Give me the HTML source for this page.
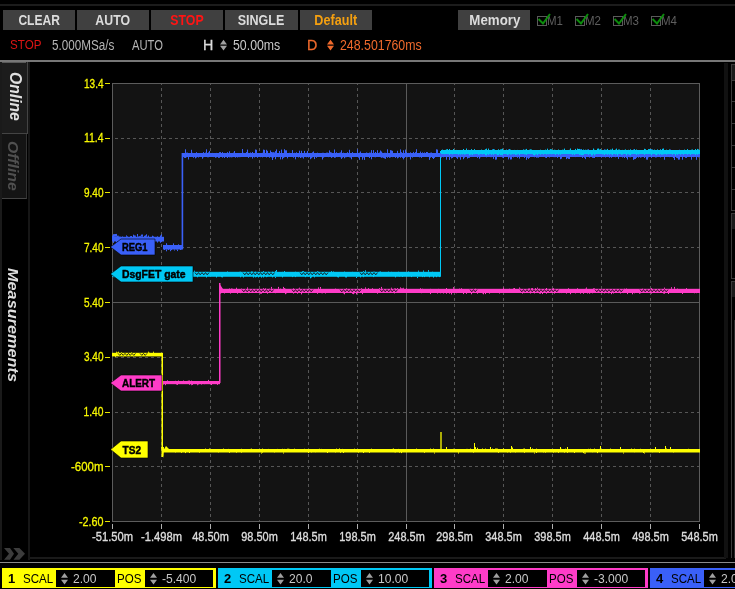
<!DOCTYPE html>
<html><head><meta charset="utf-8">
<style>
html,body{margin:0;padding:0;}
body{width:735px;height:589px;background:#000;position:relative;overflow:hidden;font-family:"Liberation Sans",sans-serif;}
.a{position:absolute;}
.btn{position:absolute;top:10px;height:20px;width:72px;background:#404040;color:#dcdcdc;font-weight:bold;font-size:14px;line-height:20px;text-align:center;}
.btn span{display:inline-block;transform:scaleX(.86);}
.t{position:absolute;white-space:nowrap;transform-origin:0 0;}
.cb{position:absolute;top:16px;width:8px;height:8px;border:1px solid #5a5a5a;}
.cbm{position:absolute;top:15px;color:#5e5e5e;font-size:12.5px;line-height:12px;transform:scaleX(.92);transform-origin:0 0;}
.plot{position:absolute;left:0;top:0;}
.yl{font-family:"Liberation Sans",sans-serif;font-size:13px;fill:#f8f800;stroke:#f8f800;stroke-width:0.3px;}
.xl{font-family:"Liberation Sans",sans-serif;font-size:12.5px;fill:#dcdcdc;stroke:#dcdcdc;stroke-width:0.35px;}
.lb{font-family:"Liberation Sans",sans-serif;font-size:11.5px;font-weight:bold;fill:#000;}
.ch{position:absolute;top:568px;height:20px;width:214px;}
.ch .num{position:absolute;left:6px;top:4px;font-size:13px;line-height:14px;color:#000;font-weight:bold;}
.ch .lab{position:absolute;top:4px;font-size:13px;line-height:14px;color:#000;transform:scaleX(.89);transform-origin:0 0;}
.ch .in{position:absolute;top:2px;height:17px;background:#000;}
.ch .val{position:absolute;top:4px;font-size:13px;line-height:14px;color:#c8c8c8;transform:scaleX(.93);transform-origin:0 0;}
</style></head><body><div id="wrap" style="position:absolute;left:0;top:0;width:735px;height:589px;will-change:transform">
<!-- top dark line -->
<div class="a" style="left:0;top:4px;width:735px;height:2px;background:#1c1c1c"></div>
<!-- toolbar buttons -->
<div class="btn" style="left:3px"><span>CLEAR</span></div>
<div class="btn" style="left:77px"><span style="transform:scaleX(.88)">AUTO</span></div>
<div class="btn" style="left:151px;color:#ff1414"><span style="transform:scaleX(.88)">STOP</span></div>
<div class="btn" style="left:225px;width:73px"><span style="transform:scaleX(.895)">SINGLE</span></div>
<div class="btn" style="left:300px;color:#f5a010"><span style="transform:scaleX(.9)">Default</span></div>
<div class="btn" style="left:460px;width:70px"><span style="transform:scaleX(.95)">Memory</span></div><div class="a" style="left:458px;top:10px;width:2px;height:20px;background:#404040"></div>
<!-- checkboxes -->
<div class="cb" style="left:537px"></div><div class="cbm" style="left:547px">M1</div>
<div class="cb" style="left:575px"></div><div class="cbm" style="left:585px">M2</div>
<div class="cb" style="left:613px"></div><div class="cbm" style="left:623px">M3</div>
<div class="cb" style="left:651px"></div><div class="cbm" style="left:661px">M4</div>
<svg class="a" style="left:0;top:0" width="735" height="40">
<path d="M538.5 19 L543 23.5 L550 14" stroke="#0c8c0c" stroke-width="2" fill="none"/>
<path d="M576.5 19 L581 23.5 L588 14" stroke="#0c8c0c" stroke-width="2" fill="none"/>
<path d="M614.5 19 L619 23.5 L626 14" stroke="#0c8c0c" stroke-width="2" fill="none"/>
<path d="M652.5 19 L657 23.5 L664 14" stroke="#0c8c0c" stroke-width="2" fill="none"/>
</svg>
<!-- row 2 -->
<div class="t" style="left:10px;top:36.5px;font-size:13.5px;color:#dc1414;transform:scaleX(.86)">STOP</div>
<div class="t" style="left:52px;top:37px;font-size:14px;color:#b4b4b4;transform:scaleX(.835)">5.000MSa/s</div>
<div class="t" style="left:132px;top:37px;font-size:14px;color:#b4b4b4;transform:scaleX(.80)">AUTO</div>
<div class="t" style="left:203px;top:35.5px;font-size:15px;color:#dcdcdc;-webkit-text-stroke:0.3px #dcdcdc;transform:scaleX(.95)">H</div>
<svg class="a" style="left:220px;top:39px" width="8" height="13"><path d="M3.5 0.8 L7 5.6 L0 5.6 Z M0 6.8 L7 6.8 L3.5 11.6 Z" fill="#a0a0a0"/></svg>
<div class="t" style="left:233px;top:37px;font-size:14px;color:#c8c8c8;transform:scaleX(.88)">50.00ms</div>
<div class="t" style="left:307px;top:35.5px;font-size:15px;color:#f06a2c;-webkit-text-stroke:0.3px #f06a2c;transform:scaleX(.95)">D</div>
<svg class="a" style="left:327px;top:39px" width="8" height="13"><path d="M3.5 0.8 L7 5.6 L0 5.6 Z M0 6.8 L7 6.8 L3.5 11.6 Z" fill="#f06a2c"/></svg>
<div class="t" style="left:340px;top:37px;font-size:14px;color:#f06a2c;transform:scaleX(.882)">248.501760ms</div>
<!-- separator -->
<div class="a" style="left:0;top:60px;width:735px;height:2px;background:#777"></div>
<!-- left sidebar -->
<div class="a" style="left:0px;top:62px;width:2px;height:498px;background:#1a1a1a"></div>
<div class="a" style="left:28px;top:62px;width:2px;height:498px;background:#161616"></div>
<div class="a" style="left:2px;top:62px;width:25px;height:71px;background:#1c1c1c;border-right:1px solid #444;border-bottom:1px solid #444"></div>
<div class="a" style="left:2px;top:62px;width:24px;height:1px;background:#5a5a5a"></div>
<div class="a" style="left:2px;top:134px;width:24px;height:64px;background:#141414;border-right:1px solid #333;border-bottom:1px solid #444"></div>
<div class="t" style="left:24px;top:72px;font-size:16px;font-weight:bold;font-style:italic;color:#e0e0e0;transform:rotate(90deg) scaleX(.98)">Online</div>
<div class="t" style="left:20.5px;top:141px;font-size:14.5px;font-weight:bold;font-style:italic;color:#505050;transform:rotate(90deg) scaleX(1.09)">Offline</div>
<div class="t" style="left:22px;top:268px;font-size:15.5px;font-weight:bold;font-style:italic;color:#dedede;transform:rotate(90deg) scaleX(1.05)">Measurements</div>
<svg class="a" style="left:0;top:540px" width="30" height="22"><path d="M4 8 L10 8 L14 13.8 L10 19.8 L4 19.8 L9 13.8 Z M13.3 8 L19.4 8 L25 13.8 L19.4 19.8 L13.5 19.8 L18.3 13.8 Z" fill="#3c3c3c"/></svg>
<!-- bottom dark line -->
<div class="a" style="left:30px;top:557px;width:696px;height:2px;background:#1a1a1a"></div>
<!-- right strip -->
<div class="a" style="left:724px;top:63px;width:4px;height:495px;background:#111"></div>
<div class="a" style="left:731px;top:64px;width:4px;height:16px;background:#1a1a1a;border-left:1px solid #3a3a3a;border-top:1px solid #3a3a3a"></div>
<div class="a" style="left:731px;top:80px;width:1px;height:130px;background:#3a3a3a"></div>
<div class="a" style="left:731px;top:80px;width:4px;height:1px;background:#3a3a3a"></div>
<div class="a" style="left:731px;top:101px;width:4px;height:1px;background:#3a3a3a"></div>
<div class="a" style="left:731px;top:123px;width:4px;height:1px;background:#3a3a3a"></div>
<div class="a" style="left:731px;top:145px;width:4px;height:1px;background:#3a3a3a"></div>
<div class="a" style="left:731px;top:167px;width:4px;height:1px;background:#3a3a3a"></div>
<div class="a" style="left:731px;top:189px;width:4px;height:1px;background:#3a3a3a"></div>
<div class="a" style="left:731px;top:210px;width:4px;height:1px;background:#3a3a3a"></div>
<div class="a" style="left:731px;top:213px;width:4px;height:15px;background:#1a1a1a;border-left:1px solid #3a3a3a;border-top:1px solid #3a3a3a"></div>
<div class="a" style="left:731px;top:228px;width:1px;height:50px;background:#3a3a3a"></div>
<div class="a" style="left:731px;top:278px;width:4px;height:1px;background:#3a3a3a"></div>
<div class="a" style="left:731px;top:281px;width:4px;height:15px;background:#1a1a1a;border-left:1px solid #3a3a3a;border-top:1px solid #3a3a3a"></div>
<div class="a" style="left:731px;top:296px;width:1px;height:262px;background:#3a3a3a"></div>
<div class="a" style="left:734px;top:320px;width:1px;height:238px;background:#2a2a2a"></div>
<svg class="plot" width="735" height="589" viewBox="0 0 735 589">
<rect x="112" y="83" width="588" height="438" fill="#131313"/>
<line x1="161.5" y1="83" x2="161.5" y2="521" stroke="#565656" stroke-width="1" stroke-dasharray="3 3" stroke-dashoffset="-5"/>
<line x1="210.5" y1="83" x2="210.5" y2="521" stroke="#565656" stroke-width="1" stroke-dasharray="3 3" stroke-dashoffset="-5"/>
<line x1="259.5" y1="83" x2="259.5" y2="521" stroke="#565656" stroke-width="1" stroke-dasharray="3 3" stroke-dashoffset="-5"/>
<line x1="308.5" y1="83" x2="308.5" y2="521" stroke="#565656" stroke-width="1" stroke-dasharray="3 3" stroke-dashoffset="-5"/>
<line x1="357.5" y1="83" x2="357.5" y2="521" stroke="#565656" stroke-width="1" stroke-dasharray="3 3" stroke-dashoffset="-5"/>
<line x1="406.5" y1="83" x2="406.5" y2="521" stroke="#5a5a5a" stroke-width="1"/>
<line x1="454.5" y1="83" x2="454.5" y2="521" stroke="#565656" stroke-width="1" stroke-dasharray="3 3" stroke-dashoffset="-5"/>
<line x1="503.5" y1="83" x2="503.5" y2="521" stroke="#565656" stroke-width="1" stroke-dasharray="3 3" stroke-dashoffset="-5"/>
<line x1="552.5" y1="83" x2="552.5" y2="521" stroke="#565656" stroke-width="1" stroke-dasharray="3 3" stroke-dashoffset="-5"/>
<line x1="601.5" y1="83" x2="601.5" y2="521" stroke="#565656" stroke-width="1" stroke-dasharray="3 3" stroke-dashoffset="-5"/>
<line x1="650.5" y1="83" x2="650.5" y2="521" stroke="#565656" stroke-width="1" stroke-dasharray="3 3" stroke-dashoffset="-5"/>
<line x1="112" y1="138.5" x2="700" y2="138.5" stroke="#565656" stroke-width="1" stroke-dasharray="3 3" stroke-dashoffset="-3"/>
<line x1="112" y1="192.5" x2="700" y2="192.5" stroke="#565656" stroke-width="1" stroke-dasharray="3 3" stroke-dashoffset="-3"/>
<line x1="112" y1="247.5" x2="700" y2="247.5" stroke="#565656" stroke-width="1" stroke-dasharray="3 3" stroke-dashoffset="-3"/>
<line x1="112" y1="302.5" x2="700" y2="302.5" stroke="#5a5a5a" stroke-width="1"/>
<line x1="112" y1="357.5" x2="700" y2="357.5" stroke="#565656" stroke-width="1" stroke-dasharray="3 3" stroke-dashoffset="-3"/>
<line x1="112" y1="412.5" x2="700" y2="412.5" stroke="#565656" stroke-width="1" stroke-dasharray="3 3" stroke-dashoffset="-3"/>
<line x1="112" y1="466.5" x2="700" y2="466.5" stroke="#565656" stroke-width="1" stroke-dasharray="3 3" stroke-dashoffset="-3"/>
<rect x="112.5" y="83.5" width="587" height="438" fill="none" stroke="#5c5c5c" stroke-width="1"/>
<path d="M112.5 271.8V276.8M113.5 271.8V277.2M114.5 271.8V277.2M115.5 271.5V276.9M116.5 271.8V276.8M117.5 271.6V276.8M118.5 271.8V276.8M119.5 271.8V276.8M120.5 271.1V276.8M121.5 271.7V276.8M122.5 271.8V276.8M123.5 271.8V276.8M124.5 271.8V276.8M125.5 271.8V276.8M126.5 271.8V276.8M127.5 271.8V276.8M128.5 271.8V276.8M129.5 271.8V276.8M130.5 271.8V276.8M131.5 271.8V276.8M132.5 271.8V276.8M133.5 271.8V277.1M134.5 271.8V276.8M135.5 271.8V277.3M136.5 271.8V276.8M137.5 271.8V276.8M138.5 271.8V276.8M139.5 271.8V276.8M140.5 271.8V276.8M141.5 271.8V276.8M142.5 271.2V276.8M143.5 271.8V276.8M144.5 271.8V276.8M145.5 271.8V277.2M146.5 271.8V276.8M147.5 271.8V277.0M148.5 271.8V276.8M149.5 271.4V276.8M150.5 271.8V276.8M151.5 271.8V276.8M152.5 271.8V276.8M153.5 271.8V276.8M154.5 271.8V276.8M155.5 271.8V276.8M156.5 271.8V276.8M157.5 271.8V277.1M158.5 271.8V276.8M159.5 271.8V276.8M160.5 271.8V276.8M161.5 271.8V277.5M162.5 271.8V276.8M163.5 271.8V276.8M164.5 271.8V277.3M165.5 271.7V276.8M166.5 271.8V276.8M167.5 271.8V276.8M168.5 271.5V277.5M169.5 271.8V277.0M170.5 271.8V276.8M171.5 271.1V276.8M172.5 271.8V276.8M173.5 271.7V276.8M174.5 271.8V276.8M175.5 271.8V277.6M176.5 271.8V277.2M177.5 271.4V276.8M178.5 271.8V276.8M179.5 271.8V276.8M180.5 271.8V276.8M181.5 271.8V276.8M182.5 271.8V276.8M183.5 271.8V276.8M184.5 271.8V276.8M185.5 271.8V276.8M186.5 271.8V276.8M187.5 271.8V276.8M188.5 271.8V276.8M189.5 271.8V276.8M190.5 271.8V276.8M191.5 271.8V276.8M192.5 271.8V276.8M193.5 271.8V276.8M194.5 271.8V276.8M195.5 271.8V276.8M196.5 271.8V276.8M197.5 271.8V277.3M198.5 271.8V276.8M199.5 271.8V276.8M200.5 271.8V276.8M201.5 271.8V276.8M202.5 271.8V276.8M203.5 271.8V276.8M204.5 271.8V276.8M205.5 271.7V276.8M206.5 271.8V277.5M207.5 271.8V276.8M208.5 271.8V276.8M209.5 271.8V276.8M210.5 271.8V276.8M211.5 271.8V276.8M212.5 271.8V276.8M213.5 271.8V276.8M214.5 271.8V276.8M215.5 271.8V276.8M216.5 271.8V277.5M217.5 271.8V276.8M218.5 271.8V276.8M219.5 271.8V276.8M220.5 271.8V276.8M221.5 271.8V277.2M222.5 271.8V277.4M223.5 271.8V276.8M224.5 271.8V276.8M225.5 271.8V276.8M226.5 271.8V276.8M227.5 271.4V276.8M228.5 271.8V276.8M229.5 271.8V276.8M230.5 271.8V276.8M231.5 271.8V276.8M232.5 271.8V276.8M233.5 271.8V276.8M234.5 271.8V276.8M235.5 271.8V276.8M236.5 271.8V276.8M237.5 271.8V276.8M238.5 271.8V276.8M239.5 271.7V276.8M240.5 271.6V277.3M241.5 271.8V276.8M242.5 271.8V276.8M243.5 271.8V277.5M244.5 271.8V276.8M245.5 271.8V276.8M246.5 271.8V276.8M247.5 271.8V276.8M248.5 271.8V276.8M249.5 271.8V276.8M250.5 271.8V276.8M251.5 271.4V276.8M252.5 271.5V276.8M253.5 271.8V277.6M254.5 271.8V276.8M255.5 271.6V277.4M256.5 271.8V277.1M257.5 271.8V276.8M258.5 271.8V277.5M259.5 271.8V276.8M260.5 271.8V276.8M261.5 271.8V277.6M262.5 271.8V276.8M263.5 271.1V277.5M264.5 271.8V276.8M265.5 271.8V276.8M266.5 271.8V277.2M267.5 271.8V276.9M268.5 271.6V276.8M269.5 271.8V276.8M270.5 271.8V276.8M271.5 271.8V276.8M272.5 271.6V277.4M273.5 271.8V276.8M274.5 271.8V276.8M275.5 271.1V276.8M276.5 271.8V276.8M277.5 271.8V276.8M278.5 271.8V276.8M279.5 271.8V276.8M280.5 271.8V276.8M281.5 271.8V276.8M282.5 271.7V277.4M283.5 271.8V276.8M284.5 271.1V276.8M285.5 271.8V276.8M286.5 271.8V276.8M287.5 271.8V276.8M288.5 271.8V276.8M289.5 271.8V276.8M290.5 271.8V276.8M291.5 271.8V276.8M292.5 271.8V277.1M293.5 271.8V276.8M294.5 271.8V276.8M295.5 271.6V277.1M296.5 271.8V276.8M297.5 271.8V276.8M298.5 271.8V276.8M299.5 271.8V276.8M300.5 271.8V276.8M301.5 271.8V276.8M302.5 271.2V276.8M303.5 271.1V276.8M304.5 271.8V276.8M305.5 271.8V277.2M306.5 271.8V276.8M307.5 271.8V276.8M308.5 271.8V276.8M309.5 271.8V276.8M310.5 271.8V276.9M311.5 271.8V277.5M312.5 271.8V276.8M313.5 271.8V276.8M314.5 271.8V277.4M315.5 271.8V276.8M316.5 271.8V276.8M317.5 271.2V276.8M318.5 271.6V276.8M319.5 271.8V276.8M320.5 271.8V276.8M321.5 271.8V276.8M322.5 271.8V276.8M323.5 271.8V276.8M324.5 271.7V276.8M325.5 271.8V276.8M326.5 271.8V276.8M327.5 271.8V276.8M328.5 271.8V276.8M329.5 271.8V276.8M330.5 271.8V276.8M331.5 271.1V276.8M332.5 271.8V276.8M333.5 271.4V276.8M334.5 271.8V276.8M335.5 271.8V276.8M336.5 271.8V276.8M337.5 271.8V277.2M338.5 271.8V277.5M339.5 271.8V276.8M340.5 271.8V276.8M341.5 271.8V276.8M342.5 271.8V276.8M343.5 271.8V276.8M344.5 271.5V276.8M345.5 271.8V277.4M346.5 271.8V277.5M347.5 271.8V276.8M348.5 271.8V276.8M349.5 271.8V276.8M350.5 271.8V276.8M351.5 271.8V276.8M352.5 271.7V276.8M353.5 271.8V276.8M354.5 271.8V276.8M355.5 271.8V276.8M356.5 271.8V276.8M357.5 271.8V276.8M358.5 271.8V276.8M359.5 271.8V276.8M360.5 271.8V277.4M361.5 271.8V276.8M362.5 271.8V276.8M363.5 271.1V277.2M364.5 271.8V276.8M365.5 271.8V276.8M366.5 271.8V276.8M367.5 271.8V276.8M368.5 271.8V276.8M369.5 271.8V276.8M370.5 271.8V276.8M371.5 271.8V276.8M372.5 271.8V276.8M373.5 271.6V277.1M374.5 271.6V276.8M375.5 271.8V276.8M376.5 271.8V276.8M377.5 271.8V276.8M378.5 271.8V276.8M379.5 271.6V276.8M380.5 271.4V276.8M381.5 271.8V276.8M382.5 271.8V276.8M383.5 271.8V276.8M384.5 271.8V276.8M385.5 271.8V276.8M386.5 271.8V276.8M387.5 271.8V276.8M388.5 271.5V276.8M389.5 271.8V276.8M390.5 271.8V276.8M391.5 271.7V276.8M392.5 271.8V276.8M393.5 271.8V276.8M394.5 271.8V276.8M395.5 271.8V277.4M396.5 271.8V276.8M397.5 271.8V276.8M398.5 271.6V276.8M399.5 271.8V276.9M400.5 271.8V276.8M401.5 271.8V276.8M402.5 271.8V277.0M403.5 271.8V276.8M404.5 271.8V276.8M405.5 271.8V276.8M406.5 271.8V276.8M407.5 271.8V276.8M408.5 271.4V276.8M409.5 271.8V276.8M410.5 271.8V276.8M411.5 271.8V277.1M412.5 271.8V276.8M413.5 271.8V276.8M414.5 271.8V276.8M415.5 271.8V276.8M416.5 271.8V276.8M417.5 271.8V276.8M418.5 271.8V276.8M419.5 271.8V276.8M420.5 271.8V276.8M421.5 271.8V276.8M422.5 271.8V277.1M423.5 271.8V276.8M424.5 271.8V277.1M425.5 271.8V276.8M426.5 271.8V276.8M427.5 271.8V276.8M428.5 271.8V276.8M429.5 271.8V277.3M430.5 271.8V276.8M431.5 271.8V276.8M432.5 271.6V276.8M433.5 271.8V277.6M434.5 271.8V276.8M435.5 271.8V276.8M436.5 271.8V277.2M437.5 271.8V276.8M438.5 271.8V276.8M439.5 271.8V277.1M440.5 271.8V276.8" stroke="#00c8f5" stroke-width="1" fill="none"/>
<path d="M133.5 271.8v-1.5M144.5 271.8v-1.7M423.5 271.8v-1.3M428.5 271.8v-1.7M275.5 276.8v1.1M417.5 276.8v1.3M146.5 271.8v-1.2M356.5 276.8v1.2M310.5 276.8v1.5M365.5 271.8v-1.5M117.5 276.8v1.4M190.5 276.8v1.2M276.5 271.8v-1.8M418.5 271.8v-1.2M194.5 271.8v-1.1" stroke="#00c8f5" stroke-width="1" fill="none"/>
<path d="M195.0 272.6L196.8 274.8L198.5 272.6M198.5 272.6L200.2 274.8L202.0 272.6M202.0 272.6L203.8 274.8L205.5 272.6M205.5 272.6L207.2 274.8L209.0 272.6" stroke="#131313" stroke-width="0.9" fill="none"/>
<path d="M243.0 272.6L244.8 274.8L246.5 272.6M246.5 272.6L248.2 274.8L250.0 272.6M250.0 272.6L251.8 274.8L253.5 272.6M253.5 272.6L255.2 274.8L257.0 272.6M257.0 272.6L258.8 274.8L260.5 272.6M260.5 272.6L262.2 274.8L264.0 272.6M264.0 272.6L265.8 274.8L267.5 272.6M267.5 272.6L269.2 274.8L271.0 272.6M271.0 272.6L272.8 274.8L274.5 272.6" stroke="#131313" stroke-width="0.9" fill="none"/>
<path d="M300.0 272.6L301.8 274.8L303.5 272.6M303.5 272.6L305.2 274.8L307.0 272.6M307.0 272.6L308.8 274.8L310.5 272.6M310.5 272.6L312.2 274.8L314.0 272.6M314.0 272.6L315.8 274.8L317.5 272.6M317.5 272.6L319.2 274.8L321.0 272.6M321.0 272.6L322.8 274.8L324.5 272.6M324.5 272.6L326.2 274.8L328.0 272.6" stroke="#131313" stroke-width="0.9" fill="none"/>
<path d="M360.0 272.6L361.8 274.8L363.5 272.6M363.5 272.6L365.2 274.8L367.0 272.6M367.0 272.6L368.8 274.8L370.5 272.6M370.5 272.6L372.2 274.8L374.0 272.6M374.0 272.6L375.8 274.8L377.5 272.6" stroke="#131313" stroke-width="0.9" fill="none"/>
<rect x="440" y="151" width="1" height="122" fill="#00c8f5"/>
<path d="M112.5 380.6V384.2M113.5 381.0V384.2M114.5 381.0V384.2M115.5 380.9V384.2M116.5 381.0V384.2M117.5 381.0V384.2M118.5 381.0V384.2M119.5 381.0V384.2M120.5 381.0V384.9M121.5 381.0V384.2M122.5 381.0V384.2M123.5 381.0V384.2M124.5 381.0V384.2M125.5 381.0V384.2M126.5 381.0V384.2M127.5 381.0V384.2M128.5 381.0V384.2M129.5 381.0V384.2M130.5 380.6V384.2M131.5 381.0V384.2M132.5 380.8V384.4M133.5 381.0V384.2M134.5 381.0V384.2M135.5 381.0V384.2M136.5 381.0V384.2M137.5 381.0V384.7M138.5 381.0V384.2M139.5 381.0V384.4M140.5 381.0V384.2M141.5 381.0V384.2M142.5 380.7V384.2M143.5 381.0V384.2M144.5 381.0V384.2M145.5 381.0V384.3M146.5 381.0V384.2M147.5 381.0V384.3M148.5 381.0V384.2M149.5 381.0V384.2M150.5 381.0V384.2M151.5 381.0V384.2M152.5 381.0V384.2M153.5 381.0V384.2M154.5 381.0V384.2M155.5 381.0V384.9M156.5 381.0V384.2M157.5 381.0V384.2M158.5 381.0V384.2M159.5 380.6V384.2M160.5 381.0V384.7M161.5 381.0V384.2M162.5 380.8V384.2M163.5 381.0V384.6M164.5 381.0V384.2M165.5 381.0V385.0M166.5 381.0V384.2M167.5 380.3V384.2M168.5 381.0V384.2M169.5 381.0V384.2M170.5 381.0V384.2M171.5 381.0V384.2M172.5 381.0V384.2M173.5 381.0V384.2M174.5 381.0V384.2M175.5 380.8V384.2M176.5 381.0V384.6M177.5 381.0V384.9M178.5 380.5V384.2M179.5 381.0V384.2M180.5 381.0V384.2M181.5 381.0V384.2M182.5 381.0V384.2M183.5 380.5V384.2M184.5 381.0V384.2M185.5 381.0V384.2M186.5 381.0V384.2M187.5 380.9V384.2M188.5 380.6V384.2M189.5 380.5V384.8M190.5 381.0V384.2M191.5 380.6V384.2M192.5 381.0V384.9M193.5 381.0V384.2M194.5 381.0V384.2M195.5 381.0V384.2M196.5 381.0V384.2M197.5 381.0V384.2M198.5 381.0V384.5M199.5 381.0V384.2M200.5 381.0V384.2M201.5 381.0V384.6M202.5 381.0V384.2M203.5 381.0V384.2M204.5 381.0V384.3M205.5 381.0V384.2M206.5 381.0V384.2M207.5 381.0V384.2M208.5 380.6V384.2M209.5 381.0V384.2M210.5 381.0V384.2M211.5 381.0V385.0M212.5 381.0V384.2M213.5 381.0V384.2M214.5 381.0V384.2M215.5 381.0V384.2M216.5 381.0V384.2M217.5 381.0V384.9M218.5 381.0V384.2M219.5 381.0V384.2" stroke="#ff3cc8" stroke-width="1" fill="none"/>
<path d="M197.5 384.2v1.0M208.5 381v-1.1M191.5 384.2v1.0M159.5 384.2v1.0M142.5 384.2v1.0M119.5 381v-1.4M126.5 384.2v1.0M165.5 384.2v1.0" stroke="#ff3cc8" stroke-width="1" fill="none"/>
<rect x="219" y="283" width="1.5" height="100" fill="#ff3cc8"/>
<path d="M219 283 L223 289 L220 289 Z" fill="#ff3cc8"/>
<path d="M219.5 288.8V293.0M220.5 288.8V293.7M221.5 288.8V293.1M222.5 288.8V293.0M223.5 288.8V293.0M224.5 288.8V293.5M225.5 288.8V293.0M226.5 288.8V293.0M227.5 288.8V293.0M228.5 288.8V293.0M229.5 288.4V293.0M230.5 288.8V293.6M231.5 288.4V293.0M232.5 288.6V293.0M233.5 288.8V293.0M234.5 288.8V293.0M235.5 288.8V293.0M236.5 288.1V293.0M237.5 288.8V293.7M238.5 288.8V293.0M239.5 288.8V293.0M240.5 288.8V293.2M241.5 288.5V293.0M242.5 288.8V293.0M243.5 288.8V293.0M244.5 288.8V293.0M245.5 288.8V293.0M246.5 288.8V293.0M247.5 288.8V293.0M248.5 288.8V293.2M249.5 288.8V293.0M250.5 288.8V293.0M251.5 288.8V293.0M252.5 288.8V293.0M253.5 288.8V293.0M254.5 288.8V293.0M255.5 288.8V293.0M256.5 288.8V293.0M257.5 288.8V293.0M258.5 288.8V293.0M259.5 288.8V293.0M260.5 288.8V293.7M261.5 288.8V293.7M262.5 288.8V293.0M263.5 288.2V293.0M264.5 288.8V293.0M265.5 288.3V293.0M266.5 288.8V293.0M267.5 288.8V293.7M268.5 288.8V293.0M269.5 288.6V293.0M270.5 288.8V293.0M271.5 288.8V293.0M272.5 288.8V293.0M273.5 288.7V293.0M274.5 288.8V293.0M275.5 288.8V293.2M276.5 288.8V293.0M277.5 288.8V293.0M278.5 288.8V293.0M279.5 288.8V293.0M280.5 288.5V293.0M281.5 288.8V293.0M282.5 288.8V293.0M283.5 288.8V293.0M284.5 288.1V293.0M285.5 288.6V293.0M286.5 288.8V293.4M287.5 288.8V293.0M288.5 288.8V293.0M289.5 288.8V293.0M290.5 288.8V293.0M291.5 288.8V293.0M292.5 288.8V293.0M293.5 288.3V293.6M294.5 288.8V293.0M295.5 288.8V293.0M296.5 288.8V293.0M297.5 288.8V293.7M298.5 288.6V293.0M299.5 288.8V293.0M300.5 288.8V293.0M301.5 288.8V293.0M302.5 288.8V293.0M303.5 288.8V293.0M304.5 288.8V293.0M305.5 288.8V293.0M306.5 288.8V293.0M307.5 288.8V293.0M308.5 288.8V293.0M309.5 288.4V293.0M310.5 288.8V293.0M311.5 288.8V293.0M312.5 288.8V293.0M313.5 288.8V293.0M314.5 288.8V293.0M315.5 288.8V293.0M316.5 288.8V293.0M317.5 288.8V293.8M318.5 288.5V293.0M319.5 288.8V293.0M320.5 288.8V293.0M321.5 288.8V293.2M322.5 288.8V293.3M323.5 288.8V293.0M324.5 288.8V293.0M325.5 288.8V293.5M326.5 288.8V293.0M327.5 288.8V293.0M328.5 288.8V293.0M329.5 288.8V293.0M330.5 288.8V293.0M331.5 288.8V293.0M332.5 288.8V293.0M333.5 288.8V293.0M334.5 288.8V293.0M335.5 288.5V293.0M336.5 288.8V293.0M337.5 288.8V293.0M338.5 288.8V293.0M339.5 288.8V293.0M340.5 288.8V293.0M341.5 288.8V293.0M342.5 288.8V293.0M343.5 288.8V293.4M344.5 288.8V293.0M345.5 288.8V293.0M346.5 288.3V293.0M347.5 288.8V293.0M348.5 288.8V293.0M349.5 288.8V293.0M350.5 288.8V293.0M351.5 288.8V293.0M352.5 288.8V293.8M353.5 288.8V293.2M354.5 288.8V293.3M355.5 288.8V293.0M356.5 288.8V293.0M357.5 288.8V293.0M358.5 288.8V293.0M359.5 288.8V293.0M360.5 288.8V293.0M361.5 288.2V293.0M362.5 288.8V293.0M363.5 288.8V293.0M364.5 288.8V293.0M365.5 288.8V293.0M366.5 288.8V293.0M367.5 288.8V293.0M368.5 288.1V293.0M369.5 288.8V293.0M370.5 288.8V293.0M371.5 288.8V293.0M372.5 288.2V293.0M373.5 288.8V293.0M374.5 288.8V293.0M375.5 288.8V293.0M376.5 288.8V293.0M377.5 288.8V293.7M378.5 288.8V293.0M379.5 288.1V293.0M380.5 288.8V293.0M381.5 288.8V293.0M382.5 288.7V293.0M383.5 288.8V293.0M384.5 288.8V293.0M385.5 288.8V293.0M386.5 288.8V293.0M387.5 288.8V293.0M388.5 288.8V293.0M389.5 288.8V293.0M390.5 288.8V293.0M391.5 288.8V293.0M392.5 288.8V293.0M393.5 288.8V293.0M394.5 288.4V293.4M395.5 288.4V293.0M396.5 288.8V293.0M397.5 288.1V293.0M398.5 288.8V293.0M399.5 288.8V293.0M400.5 288.8V293.0M401.5 288.3V293.0M402.5 288.3V293.0M403.5 288.8V293.0M404.5 288.8V293.0M405.5 288.8V293.0M406.5 288.2V293.0M407.5 288.8V293.0M408.5 288.8V293.0M409.5 288.8V293.0M410.5 288.8V293.0M411.5 288.8V293.0M412.5 288.8V293.0M413.5 288.8V293.0M414.5 288.8V293.0M415.5 288.8V293.0M416.5 288.8V293.0M417.5 288.8V293.0M418.5 288.8V293.0M419.5 288.8V293.0M420.5 288.2V293.0M421.5 288.8V293.2M422.5 288.6V293.0M423.5 288.8V293.0M424.5 288.8V293.0M425.5 288.8V293.0M426.5 288.8V293.0M427.5 288.8V293.0M428.5 288.8V293.0M429.5 288.8V293.0M430.5 288.7V293.6M431.5 288.8V293.0M432.5 288.8V293.0M433.5 288.8V293.0M434.5 288.8V293.0M435.5 288.8V293.0M436.5 288.8V293.0M437.5 288.8V293.5M438.5 288.7V293.0M439.5 288.8V293.0M440.5 288.8V293.3M441.5 288.8V293.0M442.5 288.8V293.0M443.5 288.8V293.5M444.5 288.8V293.0M445.5 288.8V293.0M446.5 288.0V293.7M447.5 288.8V293.0M448.5 288.8V293.0M449.5 288.8V293.6M450.5 288.8V293.0M451.5 288.8V293.5M452.5 288.8V293.0M453.5 288.8V293.0M454.5 288.8V293.0M455.5 288.8V293.0M456.5 288.8V293.2M457.5 288.8V293.0M458.5 288.8V293.0M459.5 288.5V293.0M460.5 288.8V293.0M461.5 288.2V293.0M462.5 288.8V293.0M463.5 288.8V293.0M464.5 288.8V293.0M465.5 288.8V293.0M466.5 288.8V293.8M467.5 288.8V293.0M468.5 288.8V293.0M469.5 288.8V293.0M470.5 288.8V293.0M471.5 288.8V293.0M472.5 288.8V293.0M473.5 288.8V293.0M474.5 288.8V293.0M475.5 288.6V293.0M476.5 288.8V293.0M477.5 288.8V293.7M478.5 288.8V293.0M479.5 288.8V293.0M480.5 288.8V293.0M481.5 288.8V293.0M482.5 288.8V293.4M483.5 288.8V293.0M484.5 288.8V293.0M485.5 288.8V293.0M486.5 288.8V293.0M487.5 288.8V293.0M488.5 288.8V293.0M489.5 288.8V293.6M490.5 288.8V293.0M491.5 288.8V293.0M492.5 288.8V293.0M493.5 288.8V293.0M494.5 288.8V293.0M495.5 288.8V293.0M496.5 288.8V293.0M497.5 288.8V293.0M498.5 288.8V293.0M499.5 288.8V293.5M500.5 288.8V293.0M501.5 288.8V293.0M502.5 288.8V293.0M503.5 288.8V293.0M504.5 288.8V293.0M505.5 288.8V293.0M506.5 288.8V293.0M507.5 288.8V293.0M508.5 288.8V293.0M509.5 288.6V293.0M510.5 288.8V293.0M511.5 288.8V293.0M512.5 288.8V293.0M513.5 288.3V293.0M514.5 288.0V293.0M515.5 288.8V293.0M516.5 288.8V293.0M517.5 288.8V293.0M518.5 288.8V293.0M519.5 288.8V293.0M520.5 288.6V293.0M521.5 288.8V293.0M522.5 288.8V293.6M523.5 288.8V293.0M524.5 288.8V293.1M525.5 288.8V293.0M526.5 288.8V293.0M527.5 288.8V293.0M528.5 288.5V293.0M529.5 288.4V293.0M530.5 288.8V293.5M531.5 288.2V293.0M532.5 288.1V293.0M533.5 288.8V293.0M534.5 288.8V293.4M535.5 288.1V293.0M536.5 288.8V293.0M537.5 288.8V293.0M538.5 288.8V293.0M539.5 288.6V293.6M540.5 288.8V293.7M541.5 288.8V293.0M542.5 288.8V293.0M543.5 288.8V293.0M544.5 288.8V293.0M545.5 288.8V293.0M546.5 288.0V293.7M547.5 288.8V293.0M548.5 288.8V293.0M549.5 288.8V293.0M550.5 288.8V293.0M551.5 288.8V293.0M552.5 288.6V293.0M553.5 288.2V293.0M554.5 288.8V293.6M555.5 288.8V293.0M556.5 288.8V293.0M557.5 288.8V293.0M558.5 288.8V293.0M559.5 288.8V293.1M560.5 288.8V293.0M561.5 288.8V293.1M562.5 288.8V293.0M563.5 288.8V293.0M564.5 288.8V293.0M565.5 288.8V293.0M566.5 288.8V293.6M567.5 288.8V293.0M568.5 288.2V293.0M569.5 288.8V293.0M570.5 288.8V293.7M571.5 288.8V293.0M572.5 288.8V293.0M573.5 288.8V293.0M574.5 288.8V293.0M575.5 288.8V293.4M576.5 288.8V293.0M577.5 288.2V293.0M578.5 288.8V293.0M579.5 288.8V293.0M580.5 288.8V293.7M581.5 288.8V293.0M582.5 288.8V293.0M583.5 288.8V293.8M584.5 288.8V293.0M585.5 288.6V293.0M586.5 288.7V293.0M587.5 288.8V293.5M588.5 288.8V293.0M589.5 288.8V293.7M590.5 288.8V293.1M591.5 288.8V293.0M592.5 288.8V293.3M593.5 288.3V293.0M594.5 288.3V293.0M595.5 288.8V293.0M596.5 288.8V293.0M597.5 288.8V293.0M598.5 288.8V293.0M599.5 288.8V293.0M600.5 288.8V293.0M601.5 288.8V293.0M602.5 288.8V293.0M603.5 288.8V293.0M604.5 288.8V293.4M605.5 288.8V293.0M606.5 288.8V293.0M607.5 288.8V293.0M608.5 288.8V293.3M609.5 288.8V293.1M610.5 288.8V293.0M611.5 288.8V293.0M612.5 288.8V293.0M613.5 288.8V293.5M614.5 288.8V293.0M615.5 288.8V293.0M616.5 288.8V293.0M617.5 288.8V293.0M618.5 288.8V293.0M619.5 288.8V293.0M620.5 288.8V293.5M621.5 288.8V293.0M622.5 288.8V293.0M623.5 288.8V293.1M624.5 288.6V293.0M625.5 288.8V293.0M626.5 288.4V293.0M627.5 288.8V293.0M628.5 288.8V293.0M629.5 288.8V293.0M630.5 288.8V293.0M631.5 288.8V293.0M632.5 288.8V293.0M633.5 288.8V293.0M634.5 288.8V293.3M635.5 288.8V293.0M636.5 288.8V293.0M637.5 288.8V293.0M638.5 288.8V293.0M639.5 288.8V293.7M640.5 288.8V293.3M641.5 288.8V293.0M642.5 288.6V293.0M643.5 288.8V293.0M644.5 288.8V293.0M645.5 288.8V293.0M646.5 288.8V293.0M647.5 288.8V293.0M648.5 288.8V293.0M649.5 288.8V293.0M650.5 288.8V293.0M651.5 288.1V293.6M652.5 288.8V293.0M653.5 288.8V293.0M654.5 288.8V293.0M655.5 288.8V293.0M656.5 288.8V293.0M657.5 288.8V293.0M658.5 288.8V293.0M659.5 288.8V293.0M660.5 288.8V293.0M661.5 288.8V293.0M662.5 288.8V293.0M663.5 288.8V293.5M664.5 288.8V293.7M665.5 288.8V293.0M666.5 288.8V293.0M667.5 288.8V293.0M668.5 288.8V293.0M669.5 288.8V293.0M670.5 288.8V293.0M671.5 288.8V293.0M672.5 288.8V293.0M673.5 288.8V293.0M674.5 288.8V293.0M675.5 288.8V293.0M676.5 288.8V293.0M677.5 288.5V293.0M678.5 288.8V293.0M679.5 288.8V293.0M680.5 288.8V293.0M681.5 288.8V293.0M682.5 288.8V293.0M683.5 288.8V293.0M684.5 288.8V293.0M685.5 288.8V293.0M686.5 288.1V293.0M687.5 288.8V293.0M688.5 288.8V293.0M689.5 288.8V293.0M690.5 288.8V293.0M691.5 288.8V293.0M692.5 288.8V293.0M693.5 288.8V293.0M694.5 288.8V293.3M695.5 288.8V293.0M696.5 288.8V293.2M697.5 288.8V293.0M698.5 288.8V293.0M699.5 288.8V293.0" stroke="#ff3cc8" stroke-width="1" fill="none"/>
<path d="M356.5 293v1.4M483.5 293v1.3M430.5 293v1.1M485.5 293v1.1M271.5 288.8v-1.9M471.5 293v1.3M632.5 293v1.3M570.5 293v1.2M586.5 288.8v-1.3M236.5 288.8v-1.1M682.5 293v1.0M318.5 288.8v-1.4M247.5 288.8v-1.4M611.5 293v1.2M537.5 288.8v-1.2M301.5 293v1.4M381.5 288.8v-1.9M453.5 288.8v-1.6M674.5 288.8v-1.9M344.5 293v1.3M519.5 288.8v-1.3M668.5 293v1.0M664.5 288.8v-1.2M403.5 288.8v-1.0M671.5 288.8v-1.6M278.5 288.8v-1.9M391.5 288.8v-1.1M283.5 288.8v-1.9M503.5 288.8v-1.2M365.5 288.8v-1.4M362.5 293v1.2M299.5 288.8v-1.1M320.5 288.8v-1.8M285.5 293v1.2M627.5 293v1.1M400.5 288.8v-1.4M542.5 293v1.1M463.5 293v1.1M451.5 293v1.5M353.5 293v1.2" stroke="#ff3cc8" stroke-width="1" fill="none"/>
<path d="M242.0 289.6L243.8 291.8L245.5 289.6M245.5 289.6L247.2 291.8L249.0 289.6M249.0 289.6L250.8 291.8L252.5 289.6M252.5 289.6L254.2 291.8L256.0 289.6M256.0 289.6L257.8 291.8L259.5 289.6M259.5 289.6L261.2 291.8L263.0 289.6M263.0 289.6L264.8 291.8L266.5 289.6M266.5 289.6L268.2 291.8L270.0 289.6M270.0 289.6L271.8 291.8L273.5 289.6" stroke="#131313" stroke-width="0.9" fill="none"/>
<path d="M292.0 289.6L293.8 291.8L295.5 289.6M295.5 289.6L297.2 291.8L299.0 289.6M299.0 289.6L300.8 291.8L302.5 289.6M302.5 289.6L304.2 291.8L306.0 289.6M306.0 289.6L307.8 291.8L309.5 289.6M309.5 289.6L311.2 291.8L313.0 289.6" stroke="#131313" stroke-width="0.9" fill="none"/>
<path d="M340.0 289.6L341.8 291.8L343.5 289.6M343.5 289.6L345.2 291.8L347.0 289.6M347.0 289.6L348.8 291.8L350.5 289.6M350.5 289.6L352.2 291.8L354.0 289.6M354.0 289.6L355.8 291.8L357.5 289.6M357.5 289.6L359.2 291.8L361.0 289.6" stroke="#131313" stroke-width="0.9" fill="none"/>
<path d="M380.0 289.6L381.8 291.8L383.5 289.6M383.5 289.6L385.2 291.8L387.0 289.6M387.0 289.6L388.8 291.8L390.5 289.6M390.5 289.6L392.2 291.8L394.0 289.6M394.0 289.6L395.8 291.8L397.5 289.6" stroke="#131313" stroke-width="0.9" fill="none"/>
<path d="M470.0 289.6L471.8 291.8L473.5 289.6M473.5 289.6L475.2 291.8L477.0 289.6" stroke="#131313" stroke-width="0.9" fill="none"/>
<path d="M520.0 289.6L521.8 291.8L523.5 289.6M523.5 289.6L525.2 291.8L527.0 289.6M527.0 289.6L528.8 291.8L530.5 289.6M530.5 289.6L532.2 291.8L534.0 289.6M534.0 289.6L535.8 291.8L537.5 289.6M537.5 289.6L539.2 291.8L541.0 289.6M541.0 289.6L542.8 291.8L544.5 289.6M544.5 289.6L546.2 291.8L548.0 289.6M548.0 289.6L549.8 291.8L551.5 289.6M551.5 289.6L553.2 291.8L555.0 289.6M555.0 289.6L556.8 291.8L558.5 289.6" stroke="#131313" stroke-width="0.9" fill="none"/>
<path d="M595.0 289.6L596.8 291.8L598.5 289.6M598.5 289.6L600.2 291.8L602.0 289.6M602.0 289.6L603.8 291.8L605.5 289.6M605.5 289.6L607.2 291.8L609.0 289.6M609.0 289.6L610.8 291.8L612.5 289.6M612.5 289.6L614.2 291.8L616.0 289.6M616.0 289.6L617.8 291.8L619.5 289.6M619.5 289.6L621.2 291.8L623.0 289.6" stroke="#131313" stroke-width="0.9" fill="none"/>
<path d="M640.0 289.6L641.8 291.8L643.5 289.6M643.5 289.6L645.2 291.8L647.0 289.6M647.0 289.6L648.8 291.8L650.5 289.6M650.5 289.6L652.2 291.8L654.0 289.6M654.0 289.6L655.8 291.8L657.5 289.6M657.5 289.6L659.2 291.8L661.0 289.6M661.0 289.6L662.8 291.8L664.5 289.6M664.5 289.6L666.2 291.8L668.0 289.6" stroke="#131313" stroke-width="0.9" fill="none"/>
<path d="M112.5 352.8V356.4M113.5 352.8V356.4M114.5 352.8V356.4M115.5 352.8V356.9M116.5 352.8V356.4M117.5 352.4V356.4M118.5 352.4V356.4M119.5 352.8V356.4M120.5 352.8V356.4M121.5 352.3V356.4M122.5 352.8V356.4M123.5 352.8V356.6M124.5 352.8V356.4M125.5 352.8V356.4M126.5 352.8V356.4M127.5 352.8V356.4M128.5 352.8V356.4M129.5 352.8V356.4M130.5 352.8V356.4M131.5 352.4V356.4M132.5 352.8V356.4M133.5 352.8V356.6M134.5 352.8V356.4M135.5 352.8V356.4M136.5 352.8V356.4M137.5 352.8V356.4M138.5 352.8V356.4M139.5 352.8V356.4M140.5 352.8V356.4M141.5 352.8V356.4M142.5 352.8V356.4M143.5 352.8V356.4M144.5 352.8V356.4M145.5 352.8V356.4M146.5 352.8V356.4M147.5 352.8V356.4M148.5 352.8V356.4M149.5 352.6V356.4M150.5 352.8V356.4M151.5 352.8V356.4M152.5 352.8V356.4M153.5 352.8V356.4M154.5 352.8V356.4M155.5 352.8V356.4M156.5 352.8V356.4M157.5 352.8V356.4M158.5 352.8V356.4M159.5 352.8V356.4M160.5 352.8V356.4M161.5 352.8V356.4M162.5 352.8V356.4" stroke="#ffff00" stroke-width="1" fill="none"/>
<path d="M148.5 352.8v-1.1M153.5 352.8v-1.1M116.5 352.8v-1.1M118.5 352.8v-1.1" stroke="#ffff00" stroke-width="1" fill="none"/>
<path d="M118.0 353.4L119.8 355.4L121.5 353.4M121.5 353.4L123.2 355.4L125.0 353.4M125.0 353.4L126.8 355.4L128.5 353.4M128.5 353.4L130.2 355.4L132.0 353.4M132.0 353.4L133.8 355.4L135.5 353.4" stroke="#131313" stroke-width="0.9" fill="none"/>
<path d="M140.0 353.4L141.8 355.4L143.5 353.4M143.5 353.4L145.2 355.4L147.0 353.4" stroke="#131313" stroke-width="0.9" fill="none"/>
<rect x="161.5" y="354" width="1.5" height="103" fill="#ffff00"/>
<path d="M162.5 449.0V452.5M163.5 449.0V452.5M164.5 449.0V452.5M165.5 449.0V452.5M166.5 449.0V452.5M167.5 449.0V452.5M168.5 449.0V452.5M169.5 449.0V452.5M170.5 449.0V452.5M171.5 449.0V452.5M172.5 449.0V452.5M173.5 449.0V452.5M174.5 449.0V452.5M175.5 449.0V452.7M176.5 449.0V452.5M177.5 449.0V452.5M178.5 449.0V452.5M179.5 449.0V452.5M180.5 449.0V452.5M181.5 449.0V452.9M182.5 449.0V452.5M183.5 449.0V452.5M184.5 449.0V452.5M185.5 449.0V453.1M186.5 449.0V452.5M187.5 449.0V452.5M188.5 449.0V452.5M189.5 449.0V453.0M190.5 449.0V452.5M191.5 449.0V452.5M192.5 449.0V452.5M193.5 449.0V452.5M194.5 449.0V452.5M195.5 449.0V452.5M196.5 449.0V452.5M197.5 449.0V452.5M198.5 449.0V452.5M199.5 449.0V452.8M200.5 449.0V452.5M201.5 449.0V452.5M202.5 449.0V452.5M203.5 449.0V452.5M204.5 449.0V452.5M205.5 448.6V452.5M206.5 449.0V452.5M207.5 449.0V452.5M208.5 449.0V452.5M209.5 448.5V452.5M210.5 449.0V452.5M211.5 449.0V452.5M212.5 449.0V452.5M213.5 449.0V452.5M214.5 449.0V452.5M215.5 449.0V452.5M216.5 449.0V452.5M217.5 449.0V452.5M218.5 449.0V452.7M219.5 449.0V452.5M220.5 449.0V452.5M221.5 449.0V452.5M222.5 449.0V452.5M223.5 448.6V452.5M224.5 449.0V452.5M225.5 449.0V452.5M226.5 449.0V452.5M227.5 449.0V452.5M228.5 448.9V452.5M229.5 449.0V452.9M230.5 449.0V452.5M231.5 449.0V452.5M232.5 449.0V452.5M233.5 449.0V452.5M234.5 449.0V452.5M235.5 449.0V452.5M236.5 449.0V452.8M237.5 449.0V452.5M238.5 449.0V452.5M239.5 449.0V452.5M240.5 449.0V452.5M241.5 448.8V452.8M242.5 449.0V452.5M243.5 449.0V452.5M244.5 449.0V452.5M245.5 449.0V452.5M246.5 449.0V452.5M247.5 449.0V452.5M248.5 449.0V452.5M249.5 449.0V452.5M250.5 448.9V452.5M251.5 448.6V452.5M252.5 449.0V452.5M253.5 449.0V452.5M254.5 449.0V452.5M255.5 449.0V452.5M256.5 449.0V452.5M257.5 449.0V452.5M258.5 449.0V452.5M259.5 449.0V452.5M260.5 449.0V452.5M261.5 449.0V452.5M262.5 448.6V452.8M263.5 449.0V452.5M264.5 449.0V452.5M265.5 449.0V452.5M266.5 449.0V452.5M267.5 449.0V452.5M268.5 448.9V452.5M269.5 449.0V452.5M270.5 449.0V452.5M271.5 449.0V452.5M272.5 449.0V452.5M273.5 449.0V452.5M274.5 449.0V452.7M275.5 449.0V452.5M276.5 449.0V452.5M277.5 448.9V452.5M278.5 449.0V452.5M279.5 449.0V452.5M280.5 449.0V452.5M281.5 449.0V452.5M282.5 448.8V452.5M283.5 449.0V452.5M284.5 448.9V452.5M285.5 449.0V452.5M286.5 449.0V452.5M287.5 448.7V452.5M288.5 448.7V452.5M289.5 448.9V452.5M290.5 449.0V452.5M291.5 449.0V452.5M292.5 449.0V452.5M293.5 449.0V452.5M294.5 448.7V452.5M295.5 449.0V452.5M296.5 449.0V452.5M297.5 449.0V452.5M298.5 449.0V452.5M299.5 449.0V452.5M300.5 449.0V452.5M301.5 449.0V452.5M302.5 449.0V452.5M303.5 449.0V452.5M304.5 448.8V452.5M305.5 449.0V452.5M306.5 449.0V452.5M307.5 449.0V452.5M308.5 449.0V453.0M309.5 449.0V452.5M310.5 449.0V452.5M311.5 449.0V452.7M312.5 449.0V452.5M313.5 449.0V452.5M314.5 449.0V452.5M315.5 449.0V452.6M316.5 449.0V452.5M317.5 449.0V452.5M318.5 449.0V452.5M319.5 448.7V452.5M320.5 449.0V452.5M321.5 448.9V452.5M322.5 449.0V452.5M323.5 449.0V452.5M324.5 449.0V452.5M325.5 449.0V452.5M326.5 449.0V452.5M327.5 449.0V453.0M328.5 449.0V452.5M329.5 449.0V452.5M330.5 449.0V452.5M331.5 449.0V452.5M332.5 449.0V452.5M333.5 449.0V452.5M334.5 449.0V452.5M335.5 449.0V452.7M336.5 448.6V452.5M337.5 449.0V452.5M338.5 449.0V452.5M339.5 448.4V452.5M340.5 449.0V452.9M341.5 449.0V452.5M342.5 448.9V452.5M343.5 449.0V453.0M344.5 449.0V452.5M345.5 449.0V452.5M346.5 449.0V452.5M347.5 449.0V452.5M348.5 449.0V452.5M349.5 449.0V452.5M350.5 449.0V452.5M351.5 449.0V452.5M352.5 449.0V452.5M353.5 449.0V452.5M354.5 448.7V452.5M355.5 449.0V452.5M356.5 449.0V452.5M357.5 449.0V452.5M358.5 449.0V452.8M359.5 449.0V452.5M360.5 449.0V452.5M361.5 449.0V452.5M362.5 449.0V452.5M363.5 449.0V453.0M364.5 449.0V452.5M365.5 449.0V452.5M366.5 449.0V452.5M367.5 449.0V452.5M368.5 449.0V452.5M369.5 449.0V452.9M370.5 449.0V452.5M371.5 448.7V452.5M372.5 449.0V452.5M373.5 449.0V452.5M374.5 449.0V452.5M375.5 449.0V452.5M376.5 449.0V452.5M377.5 449.0V452.5M378.5 449.0V452.5M379.5 449.0V452.5M380.5 449.0V452.5M381.5 449.0V452.5M382.5 449.0V452.5M383.5 449.0V452.5M384.5 449.0V452.5M385.5 449.0V452.5M386.5 449.0V452.5M387.5 449.0V452.5M388.5 449.0V452.5M389.5 449.0V452.5M390.5 449.0V452.5M391.5 449.0V452.5M392.5 448.9V452.5M393.5 448.5V452.5M394.5 449.0V452.6M395.5 449.0V452.7M396.5 449.0V452.5M397.5 449.0V452.5M398.5 448.9V452.5M399.5 449.0V452.8M400.5 449.0V452.5M401.5 449.0V453.1M402.5 449.0V452.5M403.5 449.0V452.5M404.5 449.0V452.5M405.5 449.0V452.5M406.5 449.0V452.5M407.5 449.0V452.5M408.5 449.0V452.5M409.5 449.0V452.5M410.5 449.0V452.5M411.5 449.0V452.5M412.5 449.0V452.5M413.5 449.0V452.5M414.5 449.0V452.5M415.5 449.0V452.5M416.5 448.6V452.5M417.5 449.0V452.5M418.5 449.0V452.5M419.5 449.0V452.5M420.5 449.0V452.5M421.5 449.0V452.5M422.5 449.0V452.5M423.5 449.0V452.5M424.5 449.0V452.9M425.5 449.0V452.5M426.5 449.0V452.5M427.5 449.0V452.5M428.5 449.0V452.5M429.5 449.0V452.5M430.5 448.6V452.5M431.5 449.0V452.5M432.5 449.0V452.5M433.5 448.6V452.5M434.5 449.0V452.5M435.5 449.0V452.5M436.5 449.0V452.5M437.5 449.0V452.5M438.5 449.0V452.5M439.5 449.0V452.5M440.5 449.0V452.5M441.5 449.0V452.5M442.5 449.0V452.5M443.5 449.0V452.5M444.5 449.0V452.5M445.5 449.0V452.5M446.5 449.0V452.5M447.5 449.0V452.5M448.5 449.0V452.5M449.5 449.0V452.5M450.5 449.0V452.5M451.5 449.0V452.5M452.5 449.0V452.5M453.5 448.8V452.5M454.5 449.0V452.5M455.5 449.0V452.5M456.5 449.0V452.5M457.5 449.0V452.5M458.5 449.0V452.7M459.5 449.0V452.5M460.5 449.0V452.5M461.5 449.0V452.5M462.5 449.0V452.5M463.5 449.0V452.5M464.5 449.0V452.5M465.5 449.0V452.5M466.5 448.9V452.5M467.5 448.9V452.5M468.5 449.0V452.5M469.5 449.0V452.5M470.5 448.6V452.5M471.5 449.0V452.5M472.5 449.0V452.5M473.5 449.0V452.8M474.5 449.0V452.5M475.5 449.0V452.5M476.5 449.0V452.5M477.5 449.0V452.5M478.5 449.0V452.5M479.5 449.0V452.5M480.5 449.0V452.5M481.5 449.0V452.5M482.5 448.5V452.5M483.5 449.0V452.5M484.5 449.0V452.5M485.5 448.6V452.5M486.5 449.0V452.5M487.5 449.0V452.5M488.5 449.0V452.5M489.5 449.0V452.5M490.5 449.0V452.5M491.5 449.0V452.5M492.5 448.6V452.5M493.5 449.0V452.5M494.5 449.0V452.5M495.5 448.5V452.5M496.5 448.5V452.5M497.5 448.6V452.5M498.5 449.0V452.9M499.5 449.0V452.5M500.5 449.0V452.5M501.5 449.0V452.5M502.5 449.0V452.5M503.5 448.4V452.5M504.5 449.0V452.5M505.5 449.0V452.5M506.5 449.0V452.5M507.5 449.0V452.7M508.5 449.0V452.5M509.5 449.0V452.5M510.5 449.0V452.8M511.5 449.0V452.5M512.5 449.0V452.5M513.5 449.0V452.5M514.5 449.0V452.5M515.5 449.0V452.7M516.5 449.0V452.5M517.5 449.0V452.5M518.5 449.0V452.5M519.5 449.0V452.5M520.5 449.0V452.5M521.5 449.0V452.5M522.5 449.0V452.5M523.5 448.7V452.5M524.5 448.5V452.9M525.5 449.0V452.5M526.5 449.0V452.5M527.5 449.0V452.5M528.5 449.0V452.5M529.5 449.0V452.5M530.5 449.0V452.5M531.5 449.0V452.5M532.5 448.5V452.5M533.5 449.0V452.5M534.5 449.0V452.5M535.5 449.0V452.5M536.5 448.6V453.0M537.5 449.0V452.5M538.5 449.0V452.5M539.5 449.0V452.5M540.5 449.0V452.5M541.5 449.0V452.5M542.5 449.0V452.5M543.5 449.0V452.7M544.5 449.0V452.5M545.5 449.0V452.8M546.5 449.0V452.5M547.5 449.0V452.5M548.5 449.0V452.5M549.5 449.0V452.5M550.5 449.0V452.5M551.5 449.0V452.5M552.5 449.0V452.5M553.5 449.0V452.8M554.5 449.0V452.5M555.5 449.0V452.6M556.5 449.0V452.5M557.5 449.0V452.5M558.5 449.0V452.9M559.5 449.0V452.5M560.5 449.0V452.5M561.5 448.8V452.5M562.5 449.0V452.5M563.5 449.0V452.5M564.5 449.0V452.8M565.5 448.7V452.5M566.5 449.0V452.5M567.5 448.7V452.9M568.5 449.0V452.5M569.5 449.0V452.5M570.5 449.0V452.5M571.5 449.0V452.5M572.5 449.0V452.5M573.5 449.0V452.5M574.5 449.0V453.0M575.5 449.0V452.5M576.5 449.0V452.5M577.5 449.0V452.5M578.5 449.0V452.5M579.5 449.0V452.5M580.5 449.0V452.5M581.5 449.0V452.5M582.5 449.0V452.5M583.5 449.0V453.1M584.5 449.0V452.5M585.5 449.0V452.5M586.5 449.0V452.5M587.5 449.0V452.5M588.5 448.8V452.5M589.5 449.0V452.5M590.5 448.7V452.5M591.5 449.0V452.5M592.5 449.0V452.6M593.5 449.0V452.5M594.5 448.6V452.5M595.5 449.0V452.5M596.5 449.0V452.5M597.5 449.0V453.1M598.5 449.0V452.5M599.5 448.9V452.5M600.5 449.0V452.5M601.5 449.0V452.5M602.5 449.0V452.5M603.5 449.0V452.5M604.5 449.0V452.5M605.5 449.0V452.5M606.5 449.0V452.5M607.5 449.0V452.5M608.5 449.0V452.5M609.5 449.0V452.5M610.5 448.6V452.5M611.5 449.0V452.5M612.5 449.0V452.5M613.5 449.0V452.5M614.5 449.0V452.5M615.5 449.0V452.5M616.5 449.0V452.5M617.5 449.0V452.5M618.5 449.0V452.5M619.5 449.0V452.5M620.5 449.0V452.5M621.5 449.0V452.5M622.5 449.0V452.5M623.5 449.0V452.5M624.5 449.0V452.5M625.5 449.0V452.5M626.5 449.0V452.5M627.5 449.0V452.5M628.5 449.0V452.5M629.5 449.0V452.5M630.5 449.0V452.5M631.5 448.6V452.5M632.5 449.0V452.5M633.5 449.0V452.5M634.5 448.7V452.6M635.5 449.0V452.5M636.5 449.0V452.5M637.5 449.0V452.5M638.5 449.0V452.5M639.5 449.0V452.5M640.5 448.8V452.5M641.5 449.0V452.5M642.5 449.0V452.5M643.5 449.0V453.0M644.5 449.0V452.5M645.5 449.0V452.5M646.5 449.0V452.5M647.5 449.0V452.5M648.5 449.0V452.5M649.5 449.0V452.5M650.5 449.0V452.5M651.5 449.0V452.5M652.5 449.0V452.6M653.5 449.0V452.5M654.5 449.0V452.5M655.5 449.0V452.5M656.5 449.0V452.5M657.5 449.0V452.5M658.5 449.0V452.5M659.5 449.0V452.9M660.5 449.0V452.5M661.5 449.0V452.5M662.5 449.0V452.5M663.5 449.0V452.5M664.5 449.0V452.5M665.5 449.0V452.5M666.5 448.5V452.5M667.5 449.0V452.5M668.5 449.0V452.5M669.5 449.0V452.5M670.5 448.8V452.5M671.5 449.0V452.5M672.5 449.0V452.5M673.5 449.0V452.7M674.5 449.0V452.5M675.5 449.0V452.5M676.5 449.0V452.5M677.5 449.0V452.5M678.5 449.0V452.5M679.5 449.0V452.5M680.5 449.0V452.5M681.5 449.0V452.5M682.5 449.0V452.5M683.5 449.0V452.5M684.5 449.0V452.5M685.5 449.0V452.5M686.5 449.0V452.5M687.5 449.0V452.5M688.5 448.8V452.5M689.5 449.0V452.5M690.5 449.0V452.5M691.5 449.0V452.5M692.5 449.0V452.5M693.5 449.0V452.5M694.5 449.0V452.5M695.5 449.0V452.5M696.5 449.0V452.5M697.5 449.0V452.5M698.5 449.0V452.5M699.5 449.0V452.5" stroke="#ffff00" stroke-width="1" fill="none"/>
<path d="M644.5 452.5v1.0M584.5 452.5v1.0M534.5 452.5v1.0M458.5 452.5v1.0M623.5 452.5v1.0M475.5 449v-1.9M434.5 452.5v1.0M261.5 452.5v1.0M585.5 452.5v1.0M477.5 449v-1.2M283.5 452.5v1.0M512.5 449v-1.5" stroke="#ffff00" stroke-width="1" fill="none"/>
<path d="M441 449 V432" stroke="#ffff00" stroke-width="1.3"/>
<path d="M163 451 L166 446 L170 450 Z" fill="#ffff00"/>
<path d="M161 447 L163.5 458 L164 447 Z" fill="#ffff00"/>
<path d="M446.5 449v-2M474.5 449v-6M490.5 449v-2M511.5 449v-3M530.5 449v-2M560.5 449v-2M567.5 449v-2M600.5 449v-3M620.5 449v-2M655.5 449v-2M665.5 449v-3M670.5 449v-2" stroke="#ffff00" stroke-width="1"/>
<path d="M112.5 235.5V241.5M113.5 235.7V242.9M114.5 236.5V241.5M115.5 236.8V241.5M116.5 236.8V242.1M117.5 235.7V241.5M118.5 236.8V241.5M119.5 236.5V241.5M120.5 236.6V241.6M121.5 236.8V241.5M122.5 236.4V241.5M123.5 236.8V242.8M124.5 236.8V241.5M125.5 236.8V241.5M126.5 236.8V241.5M127.5 236.3V241.5M128.5 236.8V241.5M129.5 236.8V242.9M130.5 236.1V241.5M131.5 236.0V241.5M132.5 236.8V241.5M133.5 236.0V242.2M134.5 235.4V241.5M135.5 236.8V242.3M136.5 236.8V243.0M137.5 236.8V241.5M138.5 236.5V241.5M139.5 236.2V241.5M140.5 236.7V242.1M141.5 236.8V242.5M142.5 236.8V242.1M143.5 236.8V241.5M144.5 235.8V241.5M145.5 235.3V241.5M146.5 236.8V242.4M147.5 236.6V241.5M148.5 235.5V242.7M149.5 236.8V241.5M150.5 236.8V242.6M151.5 236.8V242.7M152.5 235.7V241.5M153.5 236.3V242.8M154.5 236.8V241.5M155.5 236.8V241.5M156.5 236.8V241.5M157.5 236.3V242.6M158.5 236.8V241.5M159.5 236.8V241.5M160.5 235.5V242.8M161.5 236.7V242.0M162.5 236.8V241.5M163.5 236.8V241.5" stroke="#3a60f8" stroke-width="1" fill="none"/>
<path d="M129.5 241.5v1.4M129.5 241.5v2.9M125.5 241.5v2.9M146.5 236.8v-2.5M137.5 236.8v-2.8M140.5 236.8v-1.0M126.5 241.5v2.1M114.5 236.8v-2.7M118.5 236.8v-1.1M149.5 241.5v1.1M133.5 236.8v-2.1M142.5 236.8v-2.3M126.5 236.8v-1.4M135.5 236.8v-1.2M150.5 241.5v2.9M141.5 236.8v-2.2M153.5 241.5v2.8M161.5 236.8v-2.4M116.5 241.5v1.3M154.5 241.5v2.4M128.5 241.5v1.9M143.5 241.5v1.2M144.5 241.5v1.1M128.5 241.5v2.8M113.5 236.8v-2.6M127.5 241.5v2.5M115.5 236.8v-2.8M125.5 241.5v1.1M116.5 236.8v-2.9M127.5 241.5v1.1" stroke="#3a60f8" stroke-width="1" fill="none"/>
<path d="M163.5 245.0V249.5M164.5 245.0V250.0M165.5 245.0V249.5M166.5 245.0V249.5M167.5 244.9V249.5M168.5 245.0V250.0M169.5 245.0V249.5M170.5 245.0V249.5M171.5 245.0V250.1M172.5 245.0V249.5M173.5 245.0V249.5M174.5 245.0V249.5M175.5 245.0V249.5M176.5 245.0V249.7M177.5 245.0V249.5M178.5 244.3V249.5M179.5 245.0V249.5M180.5 245.0V250.0M181.5 245.0V249.7M182.5 245.0V249.5" stroke="#3a60f8" stroke-width="1" fill="none"/>
<path d="M166.5 245v-1.3M173.5 245v-1.6M174.5 249.5v1.0M166.5 245v-1.7M170.5 249.5v1.5M177.5 249.5v1.6M170.5 249.5v1.7M166.5 249.5v1.8" stroke="#3a60f8" stroke-width="1" fill="none"/>
<rect x="181.6" y="153" width="1.6" height="96" fill="#3a60f8"/>
<path d="M182.5 153.0V157.7M183.5 153.0V157.0M184.5 153.0V157.9M185.5 153.0V157.0M186.5 152.7V157.3M187.5 152.6V157.0M188.5 153.0V157.0M189.5 153.0V157.0M190.5 153.0V157.0M191.5 152.8V157.0M192.5 152.8V157.0M193.5 153.0V157.8M194.5 153.0V157.0M195.5 153.0V157.0M196.5 152.2V157.6M197.5 153.0V157.0M198.5 153.0V157.5M199.5 153.0V157.0M200.5 153.0V157.0M201.5 153.0V157.0M202.5 153.0V157.2M203.5 152.1V157.3M204.5 153.0V157.0M205.5 152.6V157.0M206.5 153.0V157.0M207.5 153.0V157.3M208.5 152.3V157.3M209.5 153.0V157.0M210.5 153.0V157.0M211.5 153.0V157.0M212.5 152.9V157.0M213.5 153.0V157.1M214.5 153.0V157.0M215.5 153.0V157.8M216.5 152.9V157.4M217.5 153.0V157.0M218.5 153.0V157.9M219.5 152.2V157.8M220.5 152.1V157.0M221.5 153.0V157.0M222.5 152.1V157.7M223.5 153.0V157.0M224.5 152.9V158.0M225.5 153.0V157.0M226.5 153.0V157.1M227.5 152.1V158.0M228.5 153.0V157.0M229.5 152.2V157.4M230.5 153.0V157.2M231.5 153.0V157.4M232.5 153.0V157.2M233.5 152.6V157.0M234.5 153.0V157.0M235.5 153.0V157.7M236.5 153.0V157.0M237.5 153.0V157.5M238.5 153.0V157.1M239.5 153.0V157.2M240.5 153.0V157.1M241.5 153.0V157.0M242.5 153.0V157.0M243.5 152.8V157.0M244.5 153.0V157.0M245.5 153.0V157.0M246.5 152.1V157.0M247.5 152.8V157.0M248.5 152.9V157.9M249.5 153.0V157.0M250.5 152.5V157.2M251.5 153.0V157.0M252.5 152.0V157.0M253.5 153.0V157.0M254.5 153.0V157.5M255.5 153.0V157.0M256.5 152.5V157.0M257.5 153.0V157.8M258.5 153.0V157.0M259.5 153.0V157.0M260.5 153.0V157.2M261.5 153.0V157.0M262.5 152.8V157.4M263.5 152.8V157.0M264.5 153.0V157.0M265.5 153.0V157.0M266.5 152.1V157.5M267.5 153.0V157.0M268.5 153.0V157.0M269.5 153.0V157.8M270.5 152.0V157.0M271.5 152.0V157.4M272.5 152.3V157.4M273.5 152.2V157.6M274.5 152.5V157.0M275.5 153.0V157.2M276.5 152.0V157.1M277.5 153.0V157.0M278.5 153.0V157.2M279.5 152.4V157.0M280.5 153.0V157.0M281.5 153.0V157.0M282.5 153.0V157.9M283.5 153.0V157.9M284.5 153.0V157.3M285.5 153.0V157.0M286.5 153.0V157.0M287.5 153.0V157.0M288.5 153.0V157.0M289.5 152.8V157.0M290.5 153.0V157.0M291.5 153.0V157.0M292.5 152.9V157.0M293.5 153.0V157.7M294.5 152.8V157.0M295.5 153.0V157.0M296.5 152.3V157.0M297.5 153.0V157.0M298.5 153.0V157.5M299.5 153.0V157.0M300.5 153.0V158.0M301.5 153.0V157.4M302.5 153.0V157.4M303.5 153.0V157.0M304.5 152.3V157.0M305.5 153.0V157.0M306.5 152.8V157.3M307.5 152.9V157.0M308.5 153.0V157.6M309.5 153.0V157.0M310.5 153.0V157.0M311.5 153.0V157.5M312.5 152.3V157.4M313.5 153.0V157.0M314.5 153.0V157.0M315.5 153.0V157.0M316.5 153.0V157.8M317.5 152.7V157.0M318.5 153.0V157.0M319.5 153.0V157.0M320.5 153.0V157.0M321.5 153.0V157.1M322.5 152.8V157.0M323.5 152.8V157.7M324.5 153.0V157.1M325.5 153.0V157.0M326.5 152.7V157.0M327.5 152.6V157.0M328.5 152.9V157.2M329.5 152.4V157.0M330.5 152.2V157.0M331.5 152.5V157.9M332.5 153.0V157.2M333.5 153.0V157.0M334.5 153.0V157.8M335.5 153.0V157.6M336.5 152.3V157.0M337.5 153.0V157.1M338.5 153.0V157.0M339.5 152.8V157.0M340.5 152.4V157.3M341.5 153.0V157.0M342.5 153.0V157.7M343.5 152.7V157.0M344.5 153.0V157.0M345.5 153.0V157.3M346.5 153.0V157.2M347.5 152.2V157.0M348.5 153.0V157.0M349.5 153.0V157.3M350.5 153.0V157.6M351.5 153.0V157.0M352.5 152.1V157.0M353.5 153.0V157.1M354.5 153.0V157.0M355.5 153.0V157.0M356.5 153.0V157.0M357.5 152.9V157.0M358.5 153.0V157.7M359.5 152.7V157.0M360.5 153.0V157.0M361.5 153.0V157.0M362.5 153.0V157.0M363.5 153.0V157.5M364.5 153.0V157.0M365.5 153.0V157.0M366.5 152.5V157.0M367.5 152.9V157.0M368.5 153.0V157.0M369.5 152.6V158.0M370.5 152.7V157.0M371.5 152.9V157.2M372.5 153.0V157.0M373.5 152.8V157.0M374.5 153.0V157.1M375.5 152.0V157.3M376.5 153.0V157.0M377.5 153.0V157.0M378.5 153.0V157.0M379.5 152.5V157.0M380.5 153.0V157.2M381.5 153.0V157.8M382.5 152.8V157.5M383.5 153.0V157.9M384.5 152.8V157.0M385.5 152.8V157.0M386.5 153.0V157.0M387.5 153.0V157.8M388.5 153.0V157.0M389.5 153.0V157.8M390.5 153.0V157.4M391.5 153.0V157.0M392.5 153.0V157.2M393.5 153.0V157.0M394.5 153.0V157.0M395.5 153.0V157.9M396.5 153.0V157.0M397.5 153.0V157.0M398.5 153.0V157.7M399.5 153.0V157.0M400.5 152.5V157.8M401.5 152.2V157.0M402.5 153.0V157.9M403.5 153.0V157.0M404.5 153.0V157.9M405.5 153.0V157.0M406.5 152.2V157.0M407.5 153.0V157.3M408.5 152.9V157.0M409.5 153.0V157.1M410.5 152.3V157.5M411.5 153.0V157.0M412.5 153.0V157.6M413.5 153.0V157.0M414.5 153.0V157.0M415.5 152.1V157.0M416.5 152.4V157.0M417.5 153.0V157.0M418.5 153.0V157.0M419.5 153.0V157.4M420.5 153.0V157.0M421.5 153.0V157.9M422.5 152.4V157.0M423.5 153.0V157.0M424.5 152.5V157.0M425.5 153.0V157.0M426.5 152.3V157.0M427.5 152.1V157.0M428.5 153.0V157.0M429.5 153.0V157.0M430.5 152.7V157.7M431.5 152.5V157.0M432.5 153.0V158.0M433.5 153.0V157.0M434.5 153.0V157.9M435.5 153.0V157.0M436.5 153.0V157.0M437.5 153.0V157.0M438.5 153.0V157.0M439.5 153.0V157.0M440.5 153.0V157.0M441.5 153.0V157.6M442.5 153.0V157.0M443.5 153.0V157.3M444.5 153.0V157.0M445.5 153.0V157.0M446.5 152.3V157.0M447.5 152.7V157.0M448.5 152.4V157.0M449.5 152.4V157.0M450.5 153.0V157.0M451.5 153.0V157.8M452.5 153.0V157.9M453.5 153.0V157.1M454.5 153.0V157.0M455.5 152.5V157.0M456.5 153.0V157.8M457.5 152.8V157.4M458.5 153.0V157.2M459.5 152.9V157.3M460.5 153.0V157.5M461.5 153.0V157.0M462.5 153.0V157.0M463.5 153.0V157.6M464.5 152.8V157.7M465.5 153.0V157.0M466.5 153.0V157.0M467.5 153.0V157.0M468.5 153.0V157.9M469.5 153.0V157.8M470.5 153.0V157.0M471.5 153.0V157.0M472.5 153.0V157.0M473.5 152.4V157.0M474.5 153.0V157.0M475.5 152.6V157.0M476.5 153.0V157.0M477.5 153.0V157.9M478.5 153.0V157.0M479.5 152.9V157.0M480.5 153.0V157.3M481.5 153.0V157.0M482.5 153.0V157.0M483.5 152.5V157.0M484.5 153.0V157.0M485.5 152.6V157.0M486.5 153.0V157.4M487.5 153.0V157.0M488.5 153.0V157.0M489.5 152.7V157.0M490.5 152.3V157.2M491.5 152.2V157.2M492.5 152.7V157.0M493.5 153.0V157.0M494.5 153.0V157.0M495.5 153.0V157.9M496.5 153.0V157.7M497.5 153.0V157.0M498.5 152.1V157.0M499.5 153.0V157.0M500.5 152.9V157.0M501.5 153.0V157.0M502.5 152.8V157.6M503.5 153.0V157.0M504.5 153.0V157.0M505.5 153.0V157.0M506.5 152.8V157.0M507.5 153.0V157.0M508.5 152.8V157.4M509.5 153.0V157.5M510.5 153.0V157.4M511.5 153.0V157.0M512.5 153.0V157.0M513.5 153.0V157.4M514.5 153.0V157.0M515.5 153.0V157.0M516.5 152.8V157.0M517.5 153.0V157.8M518.5 153.0V157.0M519.5 152.2V157.0M520.5 153.0V157.0M521.5 153.0V157.0M522.5 153.0V157.0M523.5 153.0V157.0M524.5 152.6V157.9M525.5 153.0V157.0M526.5 153.0V157.0M527.5 153.0V157.8M528.5 152.4V157.9M529.5 153.0V157.9M530.5 152.1V157.0M531.5 152.2V157.0M532.5 153.0V157.0M533.5 153.0V157.0M534.5 152.2V157.3M535.5 152.1V157.0M536.5 153.0V157.7M537.5 153.0V157.5M538.5 153.0V157.7M539.5 152.6V157.0M540.5 153.0V157.0M541.5 153.0V157.0M542.5 153.0V157.0M543.5 153.0V157.0M544.5 153.0V157.0M545.5 153.0V157.7M546.5 152.3V158.0M547.5 153.0V157.0M548.5 152.4V157.0M549.5 152.2V157.5M550.5 152.1V157.0M551.5 152.5V157.0M552.5 153.0V157.0M553.5 152.1V157.1M554.5 153.0V157.2M555.5 153.0V157.2M556.5 153.0V157.0M557.5 153.0V157.9M558.5 152.1V157.0M559.5 153.0V157.0M560.5 153.0V157.0M561.5 153.0V157.0M562.5 152.1V157.0M563.5 153.0V157.0M564.5 152.5V157.0M565.5 153.0V157.0M566.5 152.3V157.0M567.5 153.0V157.1M568.5 153.0V157.0M569.5 152.6V157.0M570.5 153.0V157.0M571.5 152.1V157.0M572.5 153.0V157.0M573.5 152.4V157.0M574.5 153.0V157.0M575.5 153.0V157.1M576.5 152.4V157.0M577.5 153.0V157.0M578.5 153.0V157.0M579.5 153.0V157.0M580.5 153.0V157.0M581.5 153.0V157.0M582.5 152.0V158.0M583.5 153.0V157.0M584.5 152.5V157.8M585.5 153.0V157.0M586.5 153.0V157.0M587.5 153.0V157.0M588.5 153.0V157.0M589.5 153.0V157.6M590.5 152.6V157.0M591.5 153.0V157.0M592.5 152.8V157.8M593.5 152.1V157.9M594.5 153.0V158.0M595.5 153.0V157.0M596.5 152.2V157.0M597.5 152.3V157.1M598.5 153.0V157.0M599.5 153.0V157.0M600.5 153.0V157.0M601.5 153.0V157.7M602.5 153.0V157.0M603.5 153.0V157.1M604.5 152.9V157.0M605.5 153.0V157.5M606.5 153.0V157.0M607.5 153.0V157.0M608.5 152.9V157.0M609.5 152.2V157.8M610.5 152.9V157.0M611.5 153.0V157.8M612.5 152.3V157.0M613.5 153.0V157.0M614.5 153.0V157.0M615.5 152.9V157.3M616.5 152.4V157.0M617.5 152.5V157.0M618.5 152.8V157.3M619.5 153.0V157.0M620.5 153.0V157.0M621.5 152.2V157.0M622.5 152.4V157.5M623.5 152.9V157.0M624.5 153.0V157.0M625.5 152.3V157.0M626.5 153.0V157.9M627.5 152.8V157.0M628.5 152.9V157.0M629.5 153.0V157.3M630.5 153.0V157.4M631.5 153.0V157.0M632.5 152.9V157.0M633.5 153.0V157.0M634.5 152.5V157.0M635.5 152.3V157.0M636.5 153.0V157.9M637.5 153.0V157.0M638.5 152.5V157.7M639.5 153.0V157.0M640.5 153.0V157.7M641.5 153.0V157.3M642.5 152.4V157.0M643.5 152.3V157.0M644.5 153.0V158.0M645.5 153.0V157.1M646.5 153.0V157.0M647.5 153.0V157.9M648.5 153.0V157.4M649.5 153.0V157.0M650.5 153.0V157.0M651.5 153.0V157.9M652.5 153.0V157.0M653.5 153.0V157.0M654.5 153.0V157.0M655.5 153.0V157.5M656.5 153.0V157.4M657.5 153.0V157.0M658.5 152.7V157.0M659.5 153.0V157.0M660.5 153.0V157.5M661.5 152.2V157.0M662.5 153.0V157.0M663.5 152.1V157.0M664.5 153.0V157.4M665.5 153.0V157.0M666.5 153.0V157.0M667.5 152.5V157.0M668.5 152.6V157.0M669.5 153.0V157.2M670.5 153.0V157.0M671.5 153.0V157.0M672.5 153.0V157.1M673.5 153.0V158.0M674.5 153.0V157.0M675.5 153.0V157.0M676.5 152.7V157.8M677.5 153.0V157.0M678.5 153.0V157.5M679.5 153.0V157.0M680.5 153.0V157.0M681.5 153.0V157.0M682.5 152.0V157.2M683.5 152.1V157.0M684.5 152.1V157.0M685.5 153.0V157.8M686.5 153.0V157.9M687.5 153.0V157.0M688.5 153.0V157.0M689.5 153.0V157.0M690.5 152.6V157.0M691.5 152.3V157.0M692.5 153.0V157.0M693.5 153.0V157.2M694.5 153.0V157.0M695.5 152.4V157.0M696.5 153.0V157.6M697.5 153.0V157.0M698.5 152.8V157.4M699.5 153.0V157.0" stroke="#3a60f8" stroke-width="1" fill="none"/>
<path d="M301.5 153v-2.2M615.5 153v-2.8M569.5 157v2.0M494.5 153v-3.3M673.5 153v-1.0M572.5 153v-2.8M362.5 157v2.7M579.5 153v-3.9M449.5 157v2.5M276.5 153v-3.6M185.5 153v-3.7M371.5 153v-2.3M649.5 153v-3.1M560.5 157v1.3M688.5 153v-1.9M397.5 153v-2.2M526.5 157v2.1M463.5 153v-1.3M561.5 157v1.7M518.5 153v-3.0M299.5 153v-2.3M552.5 153v-1.0M385.5 157v1.9M598.5 153v-1.5M651.5 153v-3.8M242.5 153v-1.7M511.5 157v2.4M691.5 157v2.6M360.5 153v-1.5M373.5 153v-2.9M322.5 157v2.5M504.5 153v-2.6M677.5 157v1.2M463.5 153v-3.0M410.5 157v2.5M510.5 157v2.5M555.5 153v-2.6M351.5 157v2.3M292.5 153v-2.9M334.5 153v-3.5M364.5 157v2.9M206.5 153v-3.7M633.5 153v-3.5M647.5 157v2.7M390.5 153v-2.9M209.5 153v-2.1M256.5 153v-3.2M234.5 153v-1.9M468.5 153v-3.2M272.5 157v3.0M633.5 157v2.9M188.5 157v2.5M416.5 153v-3.8M678.5 157v2.7M329.5 153v-2.6M568.5 157v1.9M384.5 157v1.4M460.5 157v2.7M436.5 153v-1.9M229.5 153v-1.7M560.5 153v-2.0M679.5 153v-3.3M548.5 153v-1.5M691.5 157v2.3M598.5 153v-3.3M618.5 157v1.9M397.5 157v1.4M437.5 153v-3.4M279.5 153v-2.0M307.5 153v-2.1M405.5 153v-3.4M492.5 153v-3.5M311.5 157v1.3M280.5 157v2.4M661.5 153v-3.0M630.5 153v-1.3M604.5 153v-3.7M508.5 153v-3.6M580.5 153v-1.3M377.5 153v-2.8M380.5 153v-2.5M284.5 153v-3.8M387.5 153v-3.7M287.5 157v1.4M496.5 157v2.2M359.5 157v1.7M674.5 157v3.0M344.5 157v1.3M286.5 153v-2.7M234.5 153v-1.6M444.5 153v-1.3M684.5 153v-1.0M655.5 153v-1.7M606.5 153v-1.7M191.5 153v-3.2M646.5 157v2.6M413.5 153v-1.1M580.5 153v-3.8M584.5 153v-2.3M634.5 157v2.2M670.5 153v-3.5M600.5 153v-1.1M403.5 153v-2.7M433.5 157v2.0M304.5 153v-2.1M624.5 157v1.0M682.5 157v2.7M664.5 157v2.7M627.5 157v2.5M392.5 153v-2.2M185.5 157v1.0M635.5 157v2.0M420.5 153v-1.4M263.5 153v-3.4M496.5 157v2.4M349.5 153v-3.2M252.5 157v1.6M560.5 157v2.2M696.5 157v2.8M303.5 157v1.6M637.5 153v-2.3M416.5 153v-1.6M674.5 157v2.7M585.5 157v2.1M295.5 157v2.3M451.5 157v1.4M634.5 153v-2.8M553.5 153v-2.6M618.5 153v-1.8M426.5 153v-1.0M266.5 153v-2.3M493.5 157v1.9M247.5 153v-3.4M597.5 153v-3.1M202.5 157v1.7M667.5 153v-1.1M698.5 153v-1.2M275.5 157v2.2M255.5 153v-3.5M609.5 153v-2.8M503.5 157v1.1M282.5 157v2.3M495.5 157v2.7M285.5 153v-2.7M403.5 157v2.4M467.5 157v1.6M630.5 153v-2.4M516.5 153v-1.8M270.5 153v-2.5M531.5 153v-1.3M698.5 153v-1.9M436.5 153v-3.7M463.5 157v2.2M429.5 157v2.9M446.5 157v2.7M391.5 153v-2.6M314.5 157v2.1M264.5 153v-3.1M552.5 153v-2.8M381.5 153v-1.5M281.5 153v-3.4M371.5 153v-2.9M612.5 153v-1.6M584.5 153v-2.3M566.5 157v2.1M475.5 153v-2.7M588.5 153v-3.8M528.5 157v1.9M266.5 153v-3.2M359.5 157v2.8M457.5 157v1.9M523.5 153v-2.1M371.5 157v2.3M357.5 153v-3.7M400.5 153v-3.6M341.5 153v-2.7M519.5 157v1.6M267.5 153v-2.2M195.5 157v1.4M660.5 153v-3.6M567.5 157v1.2M416.5 153v-1.7M284.5 153v-2.3M275.5 153v-1.9M242.5 153v-4.0M310.5 157v2.2M679.5 157v2.6M341.5 157v1.9M537.5 153v-1.6M526.5 157v2.8M479.5 157v1.7M695.5 153v-1.3M524.5 153v-3.2M449.5 157v2.9M639.5 153v-2.4M508.5 157v2.4M362.5 157v1.5M313.5 153v-1.6M525.5 153v-2.0M639.5 153v-1.1" stroke="#3a60f8" stroke-width="1" fill="none"/>
<path d="M441.5 150.0V154.0M442.5 149.6V154.0M443.5 150.0V154.0M444.5 150.0V154.2M445.5 149.9V154.0M446.5 149.4V154.0M447.5 149.1V154.0M448.5 150.0V154.0M449.5 149.0V154.8M450.5 150.0V154.0M451.5 150.0V154.0M452.5 150.0V154.4M453.5 149.0V154.0M454.5 150.0V154.0M455.5 150.0V154.0M456.5 149.9V154.0M457.5 150.0V154.0M458.5 150.0V154.7M459.5 150.0V154.0M460.5 150.0V154.6M461.5 150.0V154.0M462.5 150.0V154.5M463.5 150.0V154.0M464.5 150.0V154.6M465.5 150.0V154.3M466.5 149.2V154.0M467.5 150.0V154.0M468.5 150.0V154.0M469.5 150.0V154.0M470.5 150.0V154.7M471.5 149.1V154.3M472.5 150.0V154.7M473.5 150.0V154.0M474.5 149.1V154.3M475.5 150.0V154.0M476.5 150.0V154.0M477.5 150.0V154.0M478.5 150.0V154.8M479.5 150.0V154.4M480.5 150.0V154.0M481.5 149.6V154.0M482.5 150.0V154.4M483.5 150.0V154.0M484.5 149.9V154.0M485.5 149.2V154.0M486.5 150.0V154.1M487.5 150.0V154.0M488.5 150.0V154.9M489.5 150.0V154.0M490.5 150.0V154.0M491.5 150.0V154.9M492.5 149.7V154.0M493.5 149.1V154.9M494.5 149.6V154.0M495.5 150.0V154.0M496.5 150.0V154.2M497.5 150.0V154.0M498.5 149.3V154.0M499.5 150.0V154.0M500.5 149.4V154.0M501.5 149.3V154.9M502.5 149.7V154.3M503.5 150.0V154.0M504.5 150.0V154.0M505.5 150.0V154.0M506.5 149.6V154.2M507.5 150.0V154.9M508.5 150.0V154.5M509.5 149.1V154.0M510.5 149.6V154.6M511.5 150.0V154.5M512.5 150.0V154.0M513.5 150.0V154.4M514.5 149.9V154.0M515.5 150.0V154.9M516.5 150.0V154.6M517.5 149.9V154.4M518.5 150.0V154.0M519.5 150.0V154.7M520.5 150.0V154.0M521.5 150.0V154.0M522.5 150.0V154.0M523.5 149.4V154.0M524.5 150.0V154.4M525.5 149.6V154.3M526.5 150.0V154.9M527.5 150.0V154.0M528.5 150.0V154.0M529.5 149.7V154.0M530.5 149.3V154.0M531.5 149.5V154.0M532.5 150.0V154.0M533.5 150.0V155.0M534.5 150.0V154.0M535.5 150.0V154.6M536.5 150.0V154.2M537.5 150.0V154.0M538.5 150.0V154.0M539.5 150.0V154.0M540.5 149.7V154.7M541.5 150.0V154.0M542.5 150.0V154.0M543.5 150.0V154.6M544.5 150.0V154.0M545.5 149.6V154.0M546.5 150.0V154.5M547.5 150.0V154.0M548.5 150.0V154.3M549.5 149.8V154.0M550.5 149.1V154.0M551.5 149.3V154.2M552.5 149.8V154.0M553.5 150.0V154.0M554.5 149.7V154.0M555.5 149.9V154.9M556.5 150.0V154.0M557.5 150.0V154.0M558.5 149.5V154.8M559.5 150.0V154.0M560.5 150.0V154.7M561.5 150.0V154.0M562.5 149.7V154.0M563.5 149.8V154.0M564.5 150.0V154.0M565.5 150.0V154.0M566.5 150.0V154.0M567.5 150.0V154.0M568.5 150.0V154.0M569.5 149.8V154.0M570.5 150.0V154.0M571.5 150.0V154.0M572.5 150.0V154.9M573.5 150.0V154.0M574.5 150.0V154.0M575.5 150.0V154.0M576.5 150.0V154.0M577.5 150.0V154.0M578.5 149.0V154.0M579.5 150.0V154.8M580.5 150.0V154.7M581.5 149.2V154.0M582.5 150.0V154.0M583.5 149.5V154.9M584.5 150.0V154.0M585.5 149.7V154.0M586.5 149.9V154.0M587.5 149.6V154.0M588.5 150.0V154.8M589.5 150.0V154.0M590.5 150.0V154.0M591.5 150.0V154.0M592.5 150.0V154.7M593.5 150.0V154.0M594.5 149.8V154.0M595.5 150.0V154.3M596.5 150.0V154.0M597.5 149.5V154.0M598.5 149.6V154.0M599.5 149.5V154.0M600.5 149.1V154.0M601.5 150.0V154.0M602.5 150.0V154.4M603.5 150.0V154.2M604.5 150.0V154.0M605.5 149.7V154.0M606.5 149.8V154.2M607.5 150.0V154.7M608.5 150.0V154.0M609.5 150.0V154.7M610.5 149.5V154.0M611.5 149.7V154.3M612.5 150.0V154.0M613.5 150.0V154.0M614.5 150.0V154.0M615.5 149.6V154.6M616.5 149.9V154.0M617.5 150.0V154.8M618.5 149.5V154.0M619.5 149.5V154.0M620.5 150.0V154.0M621.5 150.0V154.8M622.5 149.9V154.6M623.5 150.0V154.0M624.5 149.9V154.0M625.5 149.4V154.0M626.5 150.0V154.3M627.5 150.0V154.0M628.5 149.8V154.3M629.5 150.0V154.7M630.5 149.3V154.0M631.5 150.0V154.1M632.5 150.0V154.0M633.5 150.0V154.0M634.5 149.1V154.0M635.5 150.0V154.0M636.5 149.5V154.9M637.5 150.0V154.0M638.5 150.0V154.5M639.5 150.0V154.0M640.5 150.0V154.0M641.5 150.0V154.0M642.5 150.0V154.0M643.5 150.0V154.0M644.5 150.0V154.8M645.5 149.2V154.0M646.5 150.0V154.0M647.5 150.0V154.1M648.5 149.1V154.0M649.5 149.1V154.0M650.5 149.5V154.1M651.5 149.8V154.2M652.5 149.5V154.0M653.5 150.0V154.0M654.5 149.6V154.0M655.5 150.0V154.7M656.5 150.0V154.0M657.5 149.4V154.3M658.5 150.0V154.0M659.5 150.0V154.7M660.5 149.5V154.0M661.5 150.0V154.7M662.5 149.7V154.6M663.5 150.0V154.3M664.5 150.0V154.2M665.5 150.0V154.0M666.5 149.7V154.6M667.5 150.0V154.1M668.5 150.0V154.1M669.5 149.4V154.1M670.5 150.0V154.0M671.5 150.0V154.0M672.5 150.0V154.7M673.5 150.0V154.0M674.5 150.0V154.0M675.5 150.0V154.2M676.5 150.0V154.0M677.5 150.0V154.8M678.5 150.0V154.0M679.5 150.0V154.0M680.5 150.0V154.7M681.5 150.0V154.0M682.5 150.0V154.0M683.5 150.0V154.7M684.5 149.6V154.0M685.5 150.0V154.0M686.5 150.0V154.0M687.5 149.1V154.6M688.5 150.0V154.0M689.5 150.0V154.0M690.5 150.0V154.9M691.5 149.7V154.0M692.5 149.5V154.0M693.5 150.0V154.2M694.5 150.0V154.0M695.5 149.0V154.9M696.5 150.0V154.0M697.5 150.0V154.7M698.5 149.4V154.0M699.5 150.0V154.0" stroke="#00c8f5" stroke-width="1" fill="none"/>
<path d="M612.5 150v-1.4M598.5 150v-1.2M644.5 150v-1.2M466.5 150v-1.5M570.5 150v-1.5M612.5 154v1.2M581.5 154v1.1M626.5 154v1.4M547.5 150v-1.3M577.5 150v-1.4M663.5 150v-1.5M488.5 150v-1.4M697.5 150v-1.1M591.5 154v1.4M469.5 154v1.4M500.5 154v1.0M574.5 154v1.0M662.5 150v-1.2M616.5 150v-1.4M598.5 150v-1.4M502.5 150v-1.4M594.5 154v1.4M607.5 150v-1.1M486.5 150v-1.4M485.5 154v1.2M537.5 154v1.2M579.5 150v-1.1M593.5 150v-1.4M498.5 154v1.0M630.5 154v1.2M656.5 154v1.2M463.5 150v-1.0M604.5 154v1.0M472.5 154v1.1M592.5 154v1.4M497.5 154v1.1M651.5 154v1.3M593.5 150v-1.1M526.5 150v-1.1M597.5 150v-1.3M564.5 150v-1.4M486.5 154v1.3M675.5 154v1.5M502.5 154v1.3M519.5 154v1.2M650.5 150v-1.0M534.5 154v1.4M575.5 150v-1.1M582.5 154v1.2M617.5 154v1.5" stroke="#00c8f5" stroke-width="1" fill="none"/>
<polygon points="111,246.2 112.5,245.5 121,239 155,239 155,255 121,255 112.5,248.5 111,247.8" fill="#3a60f8" stroke="#000" stroke-width="0.6"/><text x="122" y="251.0" textLength="25.5" lengthAdjust="spacingAndGlyphs" class="lb" stroke="#000" stroke-width="0.45">REG1</text>
<polygon points="111,273.2 112.5,272.5 121,266 193,266 193,282 121,282 112.5,275.5 111,274.8" fill="#00c8f5" stroke="#000" stroke-width="0.6"/><text x="122" y="278.0" textLength="63.5" lengthAdjust="spacingAndGlyphs" class="lb" stroke="#000" stroke-width="0.45">DsgFET gate</text>
<polygon points="111,382.2 112.5,381.5 121,375 162,375 162,391 121,391 112.5,384.5 111,383.8" fill="#ff3cc8" stroke="#000" stroke-width="0.6"/><text x="122" y="387.0" textLength="33" lengthAdjust="spacingAndGlyphs" class="lb" stroke="#000" stroke-width="0.45">ALERT</text>
<polygon points="111,448.7 112.5,448.0 121,441.0 148,441.0 148,458.0 121,458.0 112.5,451.0 111,450.3" fill="#ffff00" stroke="#000" stroke-width="0.6"/><text x="122.5" y="453.5" textLength="18.5" lengthAdjust="spacingAndGlyphs" class="lb" stroke="#000" stroke-width="0.45">TS2</text>
<line x1="105" y1="83.5" x2="110" y2="83.5" stroke="#e6e600" stroke-width="1"/>
<text x="84.0" y="87.5" textLength="19.5" lengthAdjust="spacingAndGlyphs" class="yl">13.4</text>
<line x1="105" y1="138.5" x2="110" y2="138.5" stroke="#e6e600" stroke-width="1"/>
<text x="84.0" y="142.2" textLength="19.5" lengthAdjust="spacingAndGlyphs" class="yl">11.4</text>
<line x1="105" y1="192.5" x2="110" y2="192.5" stroke="#e6e600" stroke-width="1"/>
<text x="84.0" y="197.0" textLength="19.5" lengthAdjust="spacingAndGlyphs" class="yl">9.40</text>
<line x1="105" y1="247.5" x2="110" y2="247.5" stroke="#e6e600" stroke-width="1"/>
<text x="84.0" y="251.8" textLength="19.5" lengthAdjust="spacingAndGlyphs" class="yl">7.40</text>
<line x1="105" y1="302.5" x2="110" y2="302.5" stroke="#e6e600" stroke-width="1"/>
<text x="84.0" y="306.5" textLength="19.5" lengthAdjust="spacingAndGlyphs" class="yl">5.40</text>
<line x1="105" y1="357.5" x2="110" y2="357.5" stroke="#e6e600" stroke-width="1"/>
<text x="84.0" y="361.2" textLength="19.5" lengthAdjust="spacingAndGlyphs" class="yl">3.40</text>
<line x1="105" y1="412.5" x2="110" y2="412.5" stroke="#e6e600" stroke-width="1"/>
<text x="83.5" y="416.0" textLength="20" lengthAdjust="spacingAndGlyphs" class="yl">1.40</text>
<line x1="105" y1="466.5" x2="110" y2="466.5" stroke="#e6e600" stroke-width="1"/>
<text x="71.0" y="470.8" textLength="32.5" lengthAdjust="spacingAndGlyphs" class="yl">-600m</text>
<line x1="105" y1="521.5" x2="110" y2="521.5" stroke="#e6e600" stroke-width="1"/>
<text x="79.0" y="525.5" textLength="24.5" lengthAdjust="spacingAndGlyphs" class="yl">-2.60</text>
<line x1="112.5" y1="524" x2="112.5" y2="529" stroke="#b0b0b0" stroke-width="1"/>
<text x="92.00" y="541" textLength="41" lengthAdjust="spacingAndGlyphs" class="xl">-51.50m</text>
<line x1="161.5" y1="524" x2="161.5" y2="529" stroke="#b0b0b0" stroke-width="1"/>
<text x="141.00" y="541" textLength="41" lengthAdjust="spacingAndGlyphs" class="xl">-1.498m</text>
<line x1="210.5" y1="524" x2="210.5" y2="529" stroke="#b0b0b0" stroke-width="1"/>
<text x="192.25" y="541" textLength="36.5" lengthAdjust="spacingAndGlyphs" class="xl">48.50m</text>
<line x1="259.5" y1="524" x2="259.5" y2="529" stroke="#b0b0b0" stroke-width="1"/>
<text x="241.25" y="541" textLength="36.5" lengthAdjust="spacingAndGlyphs" class="xl">98.50m</text>
<line x1="308.5" y1="524" x2="308.5" y2="529" stroke="#b0b0b0" stroke-width="1"/>
<text x="290.25" y="541" textLength="36.5" lengthAdjust="spacingAndGlyphs" class="xl">148.5m</text>
<line x1="357.5" y1="524" x2="357.5" y2="529" stroke="#b0b0b0" stroke-width="1"/>
<text x="339.25" y="541" textLength="36.5" lengthAdjust="spacingAndGlyphs" class="xl">198.5m</text>
<line x1="406.5" y1="524" x2="406.5" y2="529" stroke="#b0b0b0" stroke-width="1"/>
<text x="388.25" y="541" textLength="36.5" lengthAdjust="spacingAndGlyphs" class="xl">248.5m</text>
<line x1="454.5" y1="524" x2="454.5" y2="529" stroke="#b0b0b0" stroke-width="1"/>
<text x="436.25" y="541" textLength="36.5" lengthAdjust="spacingAndGlyphs" class="xl">298.5m</text>
<line x1="503.5" y1="524" x2="503.5" y2="529" stroke="#b0b0b0" stroke-width="1"/>
<text x="485.25" y="541" textLength="36.5" lengthAdjust="spacingAndGlyphs" class="xl">348.5m</text>
<line x1="552.5" y1="524" x2="552.5" y2="529" stroke="#b0b0b0" stroke-width="1"/>
<text x="534.25" y="541" textLength="36.5" lengthAdjust="spacingAndGlyphs" class="xl">398.5m</text>
<line x1="601.5" y1="524" x2="601.5" y2="529" stroke="#b0b0b0" stroke-width="1"/>
<text x="583.25" y="541" textLength="36.5" lengthAdjust="spacingAndGlyphs" class="xl">448.5m</text>
<line x1="650.5" y1="524" x2="650.5" y2="529" stroke="#b0b0b0" stroke-width="1"/>
<text x="632.25" y="541" textLength="36.5" lengthAdjust="spacingAndGlyphs" class="xl">498.5m</text>
<line x1="699.5" y1="524" x2="699.5" y2="529" stroke="#b0b0b0" stroke-width="1"/>
<text x="681.25" y="541" textLength="36.5" lengthAdjust="spacingAndGlyphs" class="xl">548.5m</text>
</svg>
<!-- bottom separator -->
<div class="a" style="left:0;top:562px;width:735px;height:1px;background:#8a8a8a"></div>
<!-- channel boxes -->
<div class="ch" style="left:2px;background:#ffff00">
 <div class="num">1</div><div class="lab" style="left:21px">SCAL</div>
 <div class="in" style="left:54px;width:59px"></div>
 <svg class="a" style="left:58.5px;top:4.5px" width="8" height="13"><path d="M3.5 0 L7 4.8 L0 4.8 Z M0 6.8 L7 6.8 L3.5 11.6 Z" fill="#a0a0a0"/></svg>
 <div class="val" style="left:71px">2.00</div>
 <div class="lab" style="left:115px">POS</div>
 <div class="in" style="left:143px;width:68px"></div>
 <svg class="a" style="left:147.5px;top:4.5px" width="8" height="13"><path d="M3.5 0 L7 4.8 L0 4.8 Z M0 6.8 L7 6.8 L3.5 11.6 Z" fill="#a0a0a0"/></svg>
 <div class="val" style="left:160px">-5.400</div>
</div>
<div class="ch" style="left:218px;background:#00c8f5">
 <div class="num">2</div><div class="lab" style="left:21px">SCAL</div>
 <div class="in" style="left:54px;width:59px"></div>
 <svg class="a" style="left:58.5px;top:4.5px" width="8" height="13"><path d="M3.5 0 L7 4.8 L0 4.8 Z M0 6.8 L7 6.8 L3.5 11.6 Z" fill="#a0a0a0"/></svg>
 <div class="val" style="left:71px">20.0</div>
 <div class="lab" style="left:115px">POS</div>
 <div class="in" style="left:143px;width:68px"></div>
 <svg class="a" style="left:147.5px;top:4.5px" width="8" height="13"><path d="M3.5 0 L7 4.8 L0 4.8 Z M0 6.8 L7 6.8 L3.5 11.6 Z" fill="#a0a0a0"/></svg>
 <div class="val" style="left:160px">10.00</div>
</div>
<div class="ch" style="left:434px;background:#ff3cc8">
 <div class="num">3</div><div class="lab" style="left:21px">SCAL</div>
 <div class="in" style="left:54px;width:59px"></div>
 <svg class="a" style="left:58.5px;top:4.5px" width="8" height="13"><path d="M3.5 0 L7 4.8 L0 4.8 Z M0 6.8 L7 6.8 L3.5 11.6 Z" fill="#a0a0a0"/></svg>
 <div class="val" style="left:71px">2.00</div>
 <div class="lab" style="left:115px">POS</div>
 <div class="in" style="left:143px;width:68px"></div>
 <svg class="a" style="left:147.5px;top:4.5px" width="8" height="13"><path d="M3.5 0 L7 4.8 L0 4.8 Z M0 6.8 L7 6.8 L3.5 11.6 Z" fill="#a0a0a0"/></svg>
 <div class="val" style="left:160px">-3.000</div>
</div>
<div class="ch" style="left:650px;background:#3a60f8">
 <div class="num">4</div><div class="lab" style="left:21px">SCAL</div>
 <div class="in" style="left:54px;width:59px"></div>
 <svg class="a" style="left:58.5px;top:4.5px" width="8" height="13"><path d="M3.5 0 L7 4.8 L0 4.8 Z M0 6.8 L7 6.8 L3.5 11.6 Z" fill="#a0a0a0"/></svg>
 <div class="val" style="left:71px">2.00</div>
</div>
</div></body></html>
